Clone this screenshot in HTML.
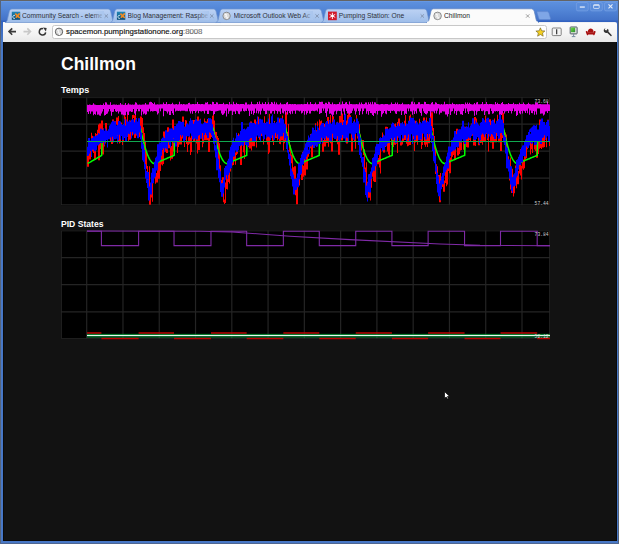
<!DOCTYPE html>
<html><head><meta charset="utf-8">
<style>
html,body{margin:0;padding:0;width:619px;height:544px;overflow:hidden;background:#4a7bcb;font-family:"Liberation Sans",sans-serif;}
.abs{position:absolute;}
#frame{left:0;top:0;width:619px;height:544px;background:linear-gradient(#6a9ce8 1px,#5c8fdd 2.5px,#5285d6 10px,#4373c9 20px,#2f5fbf 21px,#3464c0 22px,#4777c6 40px,#4777c6 544px);}
#topline{left:0;top:0;width:619px;height:0.9px;background:#646464;}
#lline{left:0;top:0;width:0.8px;height:544px;background:#56647a;}
#rline{left:618.4px;top:0;width:0.6px;height:544px;background:#56647a;}
#toolbar{left:2.6px;top:22px;width:614.2px;height:19.6px;background:linear-gradient(#e6e9ee 0px,#fbfbfb 1.2px,#f3f3f3 60%,#e8e8e8);border-radius:0 2px 0 0;}
#content{left:2.7px;top:41.6px;width:614.1px;height:499.8px;background:#121212;box-shadow:inset 1px 0 0 #0a0a0a, inset -1px 0 0 #0a0a0a, inset 0 -1px 0 #0a0a0a;}
#bline{left:0;top:543.4px;width:619px;height:0.6px;background:#4f6690;}
.tabt{position:absolute;top:12px;font-size:6.7px;color:#2e3038;white-space:nowrap;overflow:hidden;line-height:8px;}
#url{left:52px;top:25.1px;width:495px;height:13.9px;background:#fff;border:0.8px solid #c8c8c8;border-radius:2.5px;box-sizing:border-box;}
#urltext{left:66px;top:27.4px;font-size:7.78px;color:#111;-webkit-text-stroke:0.15px #111;white-space:nowrap;line-height:9px;}
#urltext span{color:#999;}
#title{left:61px;top:52.9px;font-size:17.5px;font-weight:bold;color:#fff;line-height:22px;white-space:nowrap;}
.h2{position:absolute;left:61px;font-size:9px;font-weight:bold;color:#fff;line-height:11px;white-space:nowrap;}
svg{position:absolute;left:0;top:0;}
</style></head><body>
<div id="frame" class="abs"></div>
<div id="topline" class="abs"></div>
<div id="lline" class="abs"></div>
<div id="rline" class="abs"></div>
<div id="bline" class="abs"></div>
<div id="toolbar" class="abs"></div>
<div id="content" class="abs"></div>

<svg width="619" height="42" viewBox="0 0 619 42">
  <defs>
    <linearGradient id="tabg" x1="0" y1="0" x2="0" y2="1">
      <stop offset="0" stop-color="#bcd2f4"/><stop offset="1" stop-color="#9ebde9"/>
    </linearGradient>
    <linearGradient id="fade" x1="0" y1="0" x2="1" y2="0">
      <stop offset="0" stop-color="#aac6ee" stop-opacity="0"/><stop offset="1" stop-color="#aac6ee" stop-opacity="1"/>
    </linearGradient>
    <linearGradient id="favg" x1="0" y1="0" x2="0" y2="1">
      <stop offset="0" stop-color="#2288b8"/><stop offset="1" stop-color="#0a4a72"/>
    </linearGradient>
  </defs>
  <!-- inactive tabs -->
  <path d="M5,22.5 C7,22 7.5,20 8,17 L9.3,11.5 C9.8,10 10.5,9.0 12,9.0 L108,9.0 C109.5,9.0 110.2,10 110.7,11.5 L112,17 C112.5,20 113,22 115,22.5 Z" fill="url(#tabg)" stroke="#6e93cf" stroke-width="0.7"/>
  <path d="M110.4,22.5 C112.4,22 112.9,20 113.4,17 L114.7,11.5 C115.2,10 115.9,9.0 117.4,9.0 L213.4,9.0 C214.9,9.0 215.6,10 216.1,11.5 L217.4,17 C217.9,20 218.4,22 220.4,22.5 Z" fill="url(#tabg)" stroke="#6e93cf" stroke-width="0.7"/>
  <path d="M215.8,22.5 C217.8,22 218.3,20 218.8,17 L220.1,11.5 C220.6,10 221.3,9.0 222.8,9.0 L318.8,9.0 C320.3,9.0 321,10 321.5,11.5 L322.8,17 C323.3,20 323.8,22 325.8,22.5 Z" fill="url(#tabg)" stroke="#6e93cf" stroke-width="0.7"/>
  <path d="M321.2,22.5 C323.2,22 323.7,20 324.2,17 L325.5,11.5 C326,10 326.7,9.0 328.2,9.0 L424.2,9.0 C425.7,9.0 426.4,10 426.9,11.5 L428.2,17 C428.7,20 429.2,22 431.2,22.5 Z" fill="url(#tabg)" stroke="#6e93cf" stroke-width="0.7"/>
  <!-- active tab -->
  <path d="M426.6,22.5 C428.6,22 429.1,20 429.6,17 L430.9,11.5 C431.4,10 432.1,8.8 433.6,8.8 L531.6,8.8 C533.1,9.4 533.8,10 534.3,11.5 L535.6,17 C536.1,20 536.6,22 538.6,22.5 Z" fill="#fbfbfb" stroke="#5f83bf" stroke-width="0.7"/>
  <rect x="427" y="21.6" width="111" height="1.5" fill="#fbfbfb"/>
  <!-- new tab button -->
  <path d="M537.5,11.6 L546.5,11.6 C548,11.6 548.6,12.2 549,13.2 L550.5,18.6 C550.6,19.2 550.2,19.6 549.5,19.6 L540.5,19.6 C539.4,19.6 539,19 538.7,18 L537,12.5 C536.9,12 537,11.6 537.5,11.6 Z" fill="#7fa6e6" stroke="#5f87cf" stroke-width="0.6"/>
  <!-- window buttons -->
  <rect x="576.4" y="2.6" width="11.8" height="8.3" rx="1.5" fill="#5a8ddc" stroke="#7ea4e4" stroke-width="0.6"/>
  <rect x="590.4" y="2.6" width="11.9" height="8.3" rx="1.5" fill="#5a8ddc" stroke="#7ea4e4" stroke-width="0.6"/>
  <rect x="604.5" y="2.6" width="12.1" height="8.3" rx="1.5" fill="#5a8ddc" stroke="#7ea4e4" stroke-width="0.6"/>
  <rect x="579.8" y="6.4" width="5" height="1.3" fill="#e4ebf8"/>
  <rect x="593.6" y="4.8" width="5.6" height="3.6" rx="0.6" fill="none" stroke="#e4ebf8" stroke-width="0.8"/>
  <rect x="593.6" y="4.6" width="5.6" height="1.1" fill="#e4ebf8"/>
  <path d="M608.5,4.4 L612.5,8.4 M612.5,4.4 L608.5,8.4" stroke="#e4ebf8" stroke-width="1.1"/>
  <!-- favicons -->
  <g>
    <rect x="11.8" y="11.7" width="8.4" height="8.1" fill="url(#favg)"/>
    <path d="M15.0,15.6 A1.5,1.5 0 1 0 15.0,18.2" fill="none" stroke="#d8eef8" stroke-width="1"/>
    <path d="M15.3,13.6 L19.700000000000003,18 M19.700000000000003,13.4 L15.8,17.8" stroke="#f08a22" stroke-width="1.7"/>
  </g>
  <g>
    <rect x="116.9" y="11.7" width="8.4" height="8.1" fill="url(#favg)"/>
    <path d="M120.10000000000001,15.6 A1.5,1.5 0 1 0 120.10000000000001,18.2" fill="none" stroke="#d8eef8" stroke-width="1"/>
    <path d="M120.4,13.6 L124.80000000000001,18 M124.80000000000001,13.4 L120.9,17.8" stroke="#f08a22" stroke-width="1.7"/>
  </g>
  <g>
    <circle cx="226.6" cy="15.9" r="3.7" fill="#dadada" stroke="#777" stroke-width="0.8"/>
    <path d="M224.6,13.8 L226.4,15 L225.8,16.4 L227.4,17.6 L226.9,19.2" fill="none" stroke="#fafafa" stroke-width="1.1"/>
  </g>
  <g>
    <rect x="328" y="11.6" width="8.8" height="8.6" fill="#d21a2a"/>
    <path d="M332.4,12.8 V19 M329.6,14.4 L335.2,17.4 M335.2,14.4 L329.6,17.4" stroke="#fff" stroke-width="0.9"/>
    <circle cx="332.4" cy="15.9" r="1.2" fill="#fff"/>
  </g>
  <g>
    <circle cx="437.6" cy="15.9" r="3.8" fill="#dadada" stroke="#777" stroke-width="0.8"/>
    <path d="M435.6,13.8 L437.4,15 L436.8,16.4 L438.4,17.6 L437.9,19.2" fill="none" stroke="#fafafa" stroke-width="1.1"/>
  </g>
  <!-- close x's -->
  <g stroke="#7a8aa6" stroke-width="0.8">
    <path d="M104.6,14.3 L108,17.7 M108,14.3 L104.6,17.7"/>
    <path d="M210.1,14.3 L213.5,17.7 M213.5,14.3 L210.1,17.7"/>
    <path d="M315.4,14.3 L318.8,17.7 M318.8,14.3 L315.4,17.7"/>
    <path d="M420.6,14.3 L424,17.7 M424,14.3 L420.6,17.7"/>
  </g>
  <path d="M526,14.3 L529.4,17.7 M529.4,14.3 L526,17.7" stroke="#8a8a8a" stroke-width="0.8"/>
  <!-- toolbar top edge -->
  <!-- nav icons -->
  <path d="M9,31.6 H16 M12.2,28.4 L9,31.6 L12.2,34.8" fill="none" stroke="#3a3a3a" stroke-width="1.6" stroke-linejoin="miter"/>
  <path d="M23.5,31.6 H30.5 M27.3,28.4 L30.5,31.6 L27.3,34.8" fill="none" stroke="#c8c8c8" stroke-width="1.6"/>
  <path d="M43.1,28.65 A3.2,3.2 0 1 0 45.65,32.4" fill="none" stroke="#333" stroke-width="1.5"/>
  <path d="M43.0,27.6 L46.7,27.9 L45.9,31.5 Z" fill="#333"/>
  <!-- star -->
  <path d="M540.4,27.8 L541.7,30.8 L544.9,31 L542.5,33 L543.2,36.2 L540.4,34.5 L537.6,36.2 L538.3,33 L535.9,31 L539.1,30.8 Z" fill="#f4d020" stroke="#6a5a20" stroke-width="0.6"/>
  <!-- I icon -->
  <rect x="552.2" y="28" width="9" height="7.6" rx="1" fill="#f4f4f4" stroke="#555" stroke-width="0.7"/>
  <path d="M556.7,29.3 V34.3" stroke="#222" stroke-width="1.1"/>
  <!-- green/gray icon -->
  <defs><linearGradient id="scr" x1="0" y1="0" x2="1" y2="1"><stop offset="0" stop-color="#6fe040"/><stop offset="1" stop-color="#2a8a30"/></linearGradient></defs>
  <rect x="570.2" y="27" width="6.9" height="6.9" rx="0.6" fill="#e8e8e8" stroke="#4a5560" stroke-width="1"/>
  <rect x="570.8" y="27.6" width="4.4" height="4.6" fill="url(#scr)"/>
  <path d="M573.6,34.2 V36.2 M571.8,36.6 H575.4" stroke="#6a8098" stroke-width="0.9"/>
  <!-- red couch -->
  <path d="M587.9,32.8 L587.9,31.0 C588.2,29.2 589.4,28.4 590.7,28.4 C592,28.4 593.2,29.2 593.5,31.0 L593.5,32.8 Z" fill="#a81010"/>
  <path d="M586.6,31.0 C585.6,31.0 585.6,32.0 586.0,32.6 L586.6,34.2 L587.2,35.2 L588,35.2 L588.2,34.4 L593.2,34.4 L593.4,35.2 L594.2,35.2 L594.8,34.2 L595.4,32.6 C595.8,32.0 595.8,31.0 594.8,31.0 C594.0,31.0 593.6,31.6 593.6,32.4 L587.8,32.4 C587.8,31.6 587.4,31.0 586.6,31.0 Z" fill="#a81010"/>
  <!-- wrench -->
  <path d="M605.6,28.2 C603.8,28.6 603.2,30.6 604.2,32.0 C605.0,33.0 606.4,33.2 607.2,32.8 L610.6,36.0 C611.2,36.6 612.2,35.8 611.6,35.1 L608.4,31.6 C608.8,30.8 608.6,29.6 607.8,28.8 L606.4,30.4 L605.0,30.0 L604.8,29.2 Z" fill="#333"/>
</svg>

<div class="tabt" style="left:22px;width:80px;">Community Search - eleme</div>
<div class="tabt" style="left:127.5px;width:80px;">Blog Management: Raspbe</div>
<div class="tabt" style="left:233.5px;width:78px;">Microsoft Outlook Web Ac</div>
<div class="tabt" style="left:338.8px;width:70px;">Pumping Station: One</div>
<div class="tabt" style="left:444px;width:70px;color:#222;">Chillmon</div>
<svg width="619" height="42" viewBox="0 0 619 42" style="pointer-events:none">
  <rect x="92" y="11" width="12" height="9" fill="url(#fade)"/>
  <rect x="197" y="11" width="12" height="9" fill="url(#fade)"/>
  <rect x="302" y="11" width="11" height="9" fill="url(#fade)"/>
</svg>

<div id="url" class="abs"></div>
<svg width="619" height="42" viewBox="0 0 619 42">
  <circle cx="59" cy="31.8" r="3.7" fill="#d8d8d8" stroke="#555" stroke-width="0.9"/>
  <path d="M57,29.7 L58.8,30.9 L58.2,32.3 L59.8,33.5 L59.3,35.1" fill="none" stroke="#fafafa" stroke-width="1.1"/>
  <path d="M540.4,27.8 L541.7,30.8 L544.9,31 L542.5,33 L543.2,36.2 L540.4,34.5 L537.6,36.2 L538.3,33 L535.9,31 L539.1,30.8 Z" fill="#f4d020" stroke="#6a5a20" stroke-width="0.6"/>
</svg>
<div id="urltext" class="abs">spacemon.pumpingstationone.org<span>:8008</span></div>

<div id="title" class="abs">Chillmon</div>
<div class="h2" style="top:85.4px;">Temps</div>
<div class="h2" style="top:219.1px;font-size:8.6px;">PID States</div>

<svg width="619" height="544" viewBox="0 0 619 544">
<rect x="61" y="97.2" width="489" height="107.99999999999999" fill="#000"/>
<line x1="86.70" y1="97.2" x2="86.70" y2="205.2" stroke="#242424" stroke-width="1.2"/>
<line x1="122.97" y1="97.2" x2="122.97" y2="205.2" stroke="#242424" stroke-width="1.2"/>
<line x1="159.25" y1="97.2" x2="159.25" y2="205.2" stroke="#242424" stroke-width="1.2"/>
<line x1="195.52" y1="97.2" x2="195.52" y2="205.2" stroke="#242424" stroke-width="1.2"/>
<line x1="231.80" y1="97.2" x2="231.80" y2="205.2" stroke="#242424" stroke-width="1.2"/>
<line x1="268.07" y1="97.2" x2="268.07" y2="205.2" stroke="#242424" stroke-width="1.2"/>
<line x1="304.35" y1="97.2" x2="304.35" y2="205.2" stroke="#242424" stroke-width="1.2"/>
<line x1="340.62" y1="97.2" x2="340.62" y2="205.2" stroke="#242424" stroke-width="1.2"/>
<line x1="376.90" y1="97.2" x2="376.90" y2="205.2" stroke="#242424" stroke-width="1.2"/>
<line x1="413.17" y1="97.2" x2="413.17" y2="205.2" stroke="#242424" stroke-width="1.2"/>
<line x1="449.45" y1="97.2" x2="449.45" y2="205.2" stroke="#242424" stroke-width="1.2"/>
<line x1="485.72" y1="97.2" x2="485.72" y2="205.2" stroke="#242424" stroke-width="1.2"/>
<line x1="522.00" y1="97.2" x2="522.00" y2="205.2" stroke="#242424" stroke-width="1.2"/>
<line x1="61" y1="124.20" x2="550" y2="124.20" stroke="#242424" stroke-width="1.2"/>
<line x1="61" y1="151.20" x2="550" y2="151.20" stroke="#242424" stroke-width="1.2"/>
<line x1="61" y1="178.20" x2="550" y2="178.20" stroke="#242424" stroke-width="1.2"/>
<rect x="61.5" y="97.7" width="488" height="106.99999999999999" fill="none" stroke="#262626" stroke-width="0.8"/>
<path d="M87,152.5h1V162.4h-1zM87,159.8h1V166.8h-1zM88,141.1h1V166.8h-1zM88,141.1h1V154.7h-1zM89,140.9h1V154.7h-1zM89,140.9h1V159.4h-1zM90,155.6h1V159.4h-1zM90,142.6h1V158.2h-1zM91,132.7h1V145.2h-1zM91,132.7h1V150.7h-1zM92,135.8h1V150.7h-1zM92,135.8h1V151.3h-1zM93,139.7h1V151.3h-1zM93,139.7h1V152.9h-1zM94,142.8h1V152.9h-1zM94,142.8h1V159.9h-1zM95,133.1h1V159.9h-1zM95,133.1h1V136.7h-1zM96,134.1h1V149.6h-1zM96,138.0h1V149.6h-1zM97,129.8h1V140.6h-1zM97,129.8h1V134.6h-1zM98,124.5h1V134.6h-1zM98,124.5h1V160.2h-1zM99,135.2h1V160.2h-1zM99,123.5h1V137.8h-1zM100,123.5h1V149.3h-1zM100,127.9h1V149.3h-1zM101,127.9h1V135.7h-1zM101,120.5h1V135.7h-1zM102,120.5h1V141.9h-1zM102,139.3h1V154.4h-1zM103,128.4h1V154.4h-1zM103,128.4h1V146.4h-1zM104,131.6h1V146.4h-1zM104,131.6h1V143.5h-1zM105,139.3h1V143.5h-1zM105,122.9h1V141.9h-1zM106,122.9h1V137.1h-1zM106,131.5h1V137.1h-1zM107,131.5h1V139.0h-1zM107,136.0h1V139.0h-1zM108,136.0h1V138.6h-1zM108,131.4h1V138.6h-1zM109,131.3h1V134.0h-1zM109,129.8h1V133.9h-1zM110,129.8h1V141.9h-1zM110,130.2h1V141.9h-1zM111,128.5h1V132.8h-1zM111,128.5h1V144.0h-1zM112,123.9h1V144.0h-1zM112,119.6h1V126.5h-1zM113,119.6h1V128.5h-1zM113,125.9h1V133.7h-1zM114,129.9h1V133.7h-1zM114,121.2h1V132.5h-1zM115,121.2h1V130.1h-1zM115,121.9h1V130.1h-1zM116,120.5h1V124.5h-1zM116,117.4h1V123.1h-1zM117,117.4h1V143.5h-1zM117,138.5h1V143.5h-1zM118,116.1h1V141.1h-1zM118,116.1h1V124.1h-1zM119,121.5h1V143.4h-1zM119,140.0h1V143.4h-1zM120,129.4h1V142.6h-1zM120,122.5h1V132.0h-1zM121,122.5h1V132.7h-1zM121,130.1h1V133.8h-1zM122,131.2h1V145.1h-1zM122,139.5h1V145.1h-1zM123,128.7h1V142.1h-1zM123,128.7h1V138.0h-1zM124,115.0h1V138.0h-1zM124,115.0h1V119.3h-1zM125,116.7h1V133.7h-1zM125,129.5h1V133.7h-1zM126,123.7h1V132.1h-1zM126,121.1h1V126.3h-1zM127,111.8h1V123.7h-1zM127,111.8h1V128.8h-1zM128,126.2h1V141.6h-1zM128,135.5h1V141.6h-1zM129,120.4h1V138.1h-1zM129,120.4h1V139.8h-1zM130,120.4h1V139.8h-1zM130,120.4h1V134.2h-1zM131,127.0h1V134.2h-1zM131,125.5h1V129.6h-1zM132,125.5h1V135.4h-1zM132,115.0h1V135.4h-1zM133,114.7h1V117.6h-1zM133,114.7h1V117.9h-1zM134,115.3h1V126.6h-1zM134,124.0h1V138.0h-1zM135,112.4h1V138.0h-1zM135,112.4h1V135.4h-1zM136,121.2h1V135.4h-1zM136,121.2h1V135.6h-1zM137,124.7h1V135.6h-1zM137,122.7h1V127.3h-1zM138,122.7h1V132.6h-1zM138,120.7h1V132.6h-1zM139,120.7h1V136.9h-1zM139,128.5h1V136.9h-1zM140,123.1h1V131.1h-1zM140,116.5h1V125.7h-1zM141,116.5h1V130.5h-1zM141,118.0h1V130.5h-1zM142,118.0h1V133.1h-1zM142,127.2h1V133.1h-1zM143,127.2h1V141.0h-1zM143,133.0h1V141.0h-1zM144,133.0h1V149.9h-1zM144,140.7h1V149.9h-1zM145,140.7h1V176.0h-1zM145,154.6h1V176.0h-1zM146,150.5h1V157.2h-1zM146,150.5h1V168.7h-1zM147,166.1h1V176.7h-1zM147,174.1h1V182.2h-1zM148,179.5h1V182.2h-1zM148,179.5h1V183.5h-1zM149,166.3h1V183.5h-1zM149,166.3h1V204.7h-1zM150,187.1h1V204.7h-1zM150,187.1h1V197.6h-1zM151,194.6h1V197.6h-1zM151,179.7h1V197.2h-1zM152,179.7h1V201.7h-1zM152,178.7h1V201.7h-1zM153,176.0h1V181.3h-1zM153,173.2h1V178.6h-1zM154,172.6h1V175.8h-1zM154,170.9h1V175.2h-1zM155,170.9h1V183.8h-1zM155,173.0h1V183.8h-1zM156,173.0h1V177.7h-1zM156,175.1h1V182.6h-1zM157,162.7h1V182.6h-1zM157,162.7h1V171.3h-1zM158,152.1h1V171.3h-1zM158,152.1h1V178.7h-1zM159,154.6h1V178.7h-1zM159,153.7h1V157.2h-1zM160,153.7h1V171.1h-1zM160,162.0h1V171.1h-1zM161,149.7h1V164.6h-1zM161,149.5h1V152.3h-1zM162,149.5h1V165.6h-1zM162,161.4h1V165.6h-1zM163,157.3h1V164.0h-1zM163,131.5h1V159.9h-1zM164,131.5h1V137.2h-1zM164,134.6h1V147.6h-1zM165,142.7h1V147.6h-1zM165,142.7h1V151.8h-1zM166,133.7h1V151.8h-1zM166,133.7h1V153.0h-1zM167,141.5h1V153.0h-1zM167,127.3h1V144.1h-1zM168,127.3h1V137.5h-1zM168,134.9h1V148.2h-1zM169,128.9h1V148.2h-1zM169,128.9h1V148.1h-1zM170,145.5h1V160.5h-1zM170,148.9h1V160.5h-1zM171,146.0h1V151.5h-1zM171,146.0h1V158.7h-1zM172,141.1h1V158.7h-1zM172,119.6h1V143.7h-1zM173,119.6h1V151.4h-1zM173,143.3h1V151.4h-1zM174,143.3h1V154.7h-1zM174,132.6h1V154.7h-1zM175,130.5h1V135.2h-1zM175,130.5h1V133.6h-1zM176,131.0h1V140.4h-1zM176,131.3h1V140.4h-1zM177,131.3h1V153.0h-1zM177,144.3h1V153.0h-1zM178,135.1h1V146.9h-1zM178,123.9h1V137.7h-1zM179,123.9h1V144.4h-1zM179,136.3h1V144.4h-1zM180,123.2h1V138.9h-1zM180,123.2h1V144.4h-1zM181,125.3h1V144.4h-1zM181,125.3h1V138.5h-1zM182,133.5h1V138.5h-1zM182,116.4h1V136.1h-1zM183,116.4h1V128.8h-1zM183,126.2h1V131.2h-1zM184,128.6h1V147.1h-1zM184,126.7h1V147.1h-1zM185,119.9h1V129.3h-1zM185,119.9h1V126.1h-1zM186,120.4h1V126.1h-1zM186,120.4h1V144.1h-1zM187,141.5h1V152.0h-1zM187,142.3h1V152.0h-1zM188,137.3h1V144.9h-1zM188,137.3h1V141.1h-1zM189,132.5h1V141.1h-1zM189,132.5h1V143.7h-1zM190,141.1h1V155.0h-1zM190,137.7h1V155.0h-1zM191,137.7h1V152.1h-1zM191,134.5h1V152.1h-1zM192,125.1h1V137.1h-1zM192,120.1h1V127.7h-1zM193,120.1h1V130.8h-1zM193,128.2h1V141.8h-1zM194,120.0h1V141.8h-1zM194,120.0h1V123.0h-1zM195,120.4h1V138.3h-1zM195,125.0h1V138.3h-1zM196,125.0h1V143.6h-1zM196,120.3h1V143.6h-1zM197,120.3h1V153.6h-1zM197,116.4h1V153.6h-1zM198,116.4h1V131.9h-1zM198,129.3h1V150.0h-1zM199,138.2h1V150.0h-1zM199,124.6h1V140.8h-1zM200,118.8h1V127.2h-1zM200,118.8h1V138.5h-1zM201,124.0h1V138.5h-1zM201,124.0h1V128.0h-1zM202,125.4h1V147.2h-1zM202,141.0h1V147.2h-1zM203,127.9h1V143.6h-1zM203,127.9h1V138.5h-1zM204,118.6h1V138.5h-1zM204,118.6h1V140.3h-1zM205,121.2h1V140.3h-1zM205,121.2h1V124.2h-1zM206,121.6h1V140.2h-1zM206,125.6h1V140.2h-1zM207,119.0h1V128.2h-1zM207,119.0h1V140.3h-1zM208,137.7h1V140.9h-1zM208,138.3h1V151.9h-1zM209,129.6h1V151.9h-1zM209,128.5h1V132.2h-1zM210,128.5h1V138.9h-1zM210,124.6h1V138.9h-1zM211,124.6h1V136.9h-1zM211,121.6h1V136.9h-1zM212,115.8h1V124.2h-1zM212,115.8h1V138.1h-1zM213,113.4h1V138.1h-1zM213,113.4h1V130.5h-1zM214,120.5h1V130.5h-1zM214,120.5h1V134.3h-1zM215,131.7h1V141.7h-1zM215,132.0h1V141.7h-1zM216,132.0h1V147.6h-1zM216,136.1h1V147.6h-1zM217,136.1h1V160.2h-1zM217,138.0h1V160.2h-1zM218,138.0h1V168.9h-1zM218,143.2h1V168.9h-1zM219,143.2h1V150.7h-1zM219,148.1h1V172.0h-1zM220,165.3h1V172.0h-1zM220,165.3h1V182.3h-1zM221,179.7h1V183.9h-1zM221,181.3h1V193.7h-1zM222,187.6h1V193.7h-1zM222,177.3h1V190.2h-1zM223,177.3h1V184.8h-1zM223,182.2h1V202.2h-1zM224,199.6h1V204.1h-1zM224,200.5h1V204.1h-1zM225,190.3h1V203.1h-1zM225,182.6h1V192.9h-1zM226,182.6h1V189.1h-1zM226,167.4h1V189.1h-1zM227,167.4h1V189.6h-1zM227,179.4h1V189.6h-1zM228,176.2h1V182.0h-1zM228,164.2h1V178.8h-1zM229,164.2h1V183.5h-1zM229,169.0h1V183.5h-1zM230,153.6h1V171.6h-1zM230,153.6h1V160.3h-1zM231,157.7h1V165.5h-1zM231,162.9h1V165.6h-1zM232,161.9h1V165.6h-1zM232,161.9h1V164.9h-1zM233,158.6h1V164.9h-1zM233,156.3h1V161.2h-1zM234,150.9h1V158.9h-1zM234,150.9h1V160.1h-1zM235,157.5h1V164.8h-1zM235,152.5h1V164.8h-1zM236,137.1h1V155.1h-1zM236,137.1h1V152.3h-1zM237,149.7h1V153.8h-1zM237,145.3h1V153.8h-1zM238,133.2h1V147.9h-1zM238,133.2h1V145.0h-1zM239,135.5h1V145.0h-1zM239,134.8h1V138.1h-1zM240,134.8h1V149.8h-1zM240,147.2h1V164.9h-1zM241,150.8h1V164.9h-1zM241,139.5h1V153.4h-1zM242,138.6h1V142.1h-1zM242,138.6h1V143.1h-1zM243,140.5h1V148.7h-1zM243,146.1h1V152.2h-1zM244,149.6h1V159.0h-1zM244,137.6h1V159.0h-1zM245,131.1h1V140.2h-1zM245,131.1h1V142.2h-1zM246,136.2h1V142.2h-1zM246,130.2h1V138.8h-1zM247,130.2h1V134.9h-1zM247,132.3h1V137.1h-1zM248,134.5h1V147.0h-1zM248,134.0h1V147.0h-1zM249,134.0h1V138.4h-1zM249,135.8h1V148.4h-1zM250,122.4h1V148.4h-1zM250,121.4h1V125.0h-1zM251,121.4h1V150.4h-1zM251,129.8h1V150.4h-1zM252,129.8h1V140.2h-1zM252,137.6h1V146.3h-1zM253,130.6h1V146.3h-1zM253,130.6h1V146.3h-1zM254,133.2h1V146.3h-1zM254,119.6h1V135.8h-1zM255,119.6h1V135.9h-1zM255,133.3h1V140.2h-1zM256,137.6h1V147.4h-1zM256,131.7h1V147.4h-1zM257,122.7h1V134.3h-1zM257,116.8h1V125.3h-1zM258,116.8h1V129.4h-1zM258,123.9h1V129.4h-1zM259,123.9h1V137.8h-1zM259,135.2h1V139.7h-1zM260,126.1h1V139.7h-1zM260,123.1h1V128.7h-1zM261,123.1h1V136.0h-1zM261,130.3h1V136.0h-1zM262,130.3h1V133.3h-1zM262,129.3h1V133.3h-1zM263,129.3h1V144.4h-1zM263,132.2h1V144.4h-1zM264,116.2h1V134.8h-1zM264,116.2h1V125.6h-1zM265,123.0h1V131.7h-1zM265,129.1h1V132.3h-1zM266,129.7h1V140.7h-1zM266,131.1h1V140.7h-1zM267,131.1h1V144.6h-1zM267,122.9h1V144.6h-1zM268,122.9h1V154.0h-1zM268,149.9h1V154.0h-1zM269,113.7h1V152.5h-1zM269,113.7h1V127.2h-1zM270,124.6h1V127.2h-1zM270,124.6h1V136.0h-1zM271,120.5h1V136.0h-1zM271,120.5h1V135.7h-1zM272,132.3h1V135.7h-1zM272,132.3h1V141.6h-1zM273,139.0h1V145.0h-1zM273,135.2h1V145.0h-1zM274,121.1h1V137.8h-1zM274,121.1h1V135.9h-1zM275,128.9h1V135.9h-1zM275,128.9h1V137.9h-1zM276,126.1h1V137.9h-1zM276,126.1h1V136.3h-1zM277,133.7h1V140.5h-1zM277,129.2h1V140.5h-1zM278,125.9h1V131.8h-1zM278,125.9h1V134.3h-1zM279,118.6h1V134.3h-1zM279,118.6h1V143.7h-1zM280,141.1h1V144.2h-1zM280,118.7h1V144.2h-1zM281,118.7h1V128.0h-1zM281,125.4h1V140.6h-1zM282,115.5h1V140.6h-1zM282,115.5h1V140.4h-1zM283,137.8h1V150.4h-1zM283,132.2h1V150.4h-1zM284,132.2h1V143.2h-1zM284,138.6h1V143.2h-1zM285,131.2h1V141.2h-1zM285,112.3h1V133.8h-1zM286,112.3h1V125.9h-1zM286,123.3h1V140.6h-1zM287,132.1h1V140.6h-1zM287,132.1h1V140.3h-1zM288,124.1h1V140.3h-1zM288,124.1h1V142.6h-1zM289,140.0h1V151.7h-1zM289,145.3h1V151.7h-1zM290,145.3h1V165.0h-1zM290,160.7h1V165.0h-1zM291,156.0h1V163.3h-1zM291,154.4h1V158.6h-1zM292,154.4h1V174.9h-1zM292,167.3h1V174.9h-1zM293,167.3h1V179.7h-1zM293,177.1h1V188.2h-1zM294,169.5h1V188.2h-1zM294,166.3h1V172.1h-1zM295,166.3h1V187.1h-1zM295,184.5h1V195.3h-1zM296,187.2h1V195.3h-1zM296,187.2h1V204.2h-1zM297,184.8h1V204.2h-1zM297,181.2h1V187.4h-1zM298,171.5h1V183.8h-1zM298,171.5h1V185.5h-1zM299,168.4h1V185.5h-1zM299,168.4h1V174.3h-1zM300,166.1h1V174.3h-1zM300,158.7h1V168.7h-1zM301,158.7h1V167.3h-1zM301,164.7h1V179.9h-1zM302,152.0h1V179.9h-1zM302,152.0h1V176.8h-1zM303,165.7h1V176.8h-1zM303,165.7h1V175.2h-1zM304,162.0h1V175.2h-1zM304,159.1h1V164.6h-1zM305,159.1h1V175.4h-1zM305,148.1h1V175.4h-1zM306,148.1h1V153.2h-1zM306,150.6h1V169.6h-1zM307,142.1h1V169.6h-1zM307,142.1h1V155.0h-1zM308,152.4h1V156.8h-1zM308,151.2h1V156.8h-1zM309,143.6h1V153.8h-1zM309,143.6h1V148.2h-1zM310,134.1h1V148.2h-1zM310,134.1h1V137.9h-1zM311,135.3h1V149.4h-1zM311,146.8h1V157.2h-1zM312,127.8h1V157.2h-1zM312,127.8h1V146.2h-1zM313,141.8h1V146.2h-1zM313,141.8h1V147.5h-1zM314,140.3h1V147.5h-1zM314,132.4h1V142.9h-1zM315,123.3h1V135.0h-1zM315,123.3h1V145.4h-1zM316,131.1h1V145.4h-1zM316,130.3h1V133.7h-1zM317,121.4h1V132.9h-1zM317,121.4h1V134.2h-1zM318,131.6h1V138.8h-1zM318,136.1h1V138.8h-1zM319,119.5h1V138.7h-1zM319,119.5h1V141.3h-1zM320,128.3h1V141.3h-1zM320,121.2h1V130.9h-1zM321,120.6h1V123.8h-1zM321,120.6h1V141.0h-1zM322,138.4h1V145.7h-1zM322,143.1h1V151.8h-1zM323,148.9h1V151.8h-1zM323,140.1h1V151.5h-1zM324,124.1h1V142.7h-1zM324,124.1h1V146.5h-1zM325,139.7h1V146.5h-1zM325,139.7h1V142.6h-1zM326,132.7h1V142.6h-1zM326,132.7h1V143.0h-1zM327,127.8h1V143.0h-1zM327,117.0h1V130.4h-1zM328,117.0h1V146.7h-1zM328,139.2h1V146.7h-1zM329,131.3h1V141.8h-1zM329,129.4h1V133.9h-1zM330,115.1h1V132.0h-1zM330,115.1h1V143.2h-1zM331,127.1h1V143.2h-1zM331,127.1h1V151.5h-1zM332,116.0h1V151.5h-1zM332,116.0h1V118.8h-1zM333,116.2h1V130.0h-1zM333,127.4h1V134.2h-1zM334,131.6h1V138.7h-1zM334,126.0h1V138.7h-1zM335,126.0h1V136.6h-1zM335,132.4h1V136.6h-1zM336,132.4h1V141.2h-1zM336,134.6h1V141.2h-1zM337,121.8h1V137.2h-1zM337,121.8h1V144.2h-1zM338,141.6h1V147.9h-1zM338,145.3h1V154.8h-1zM339,128.4h1V154.8h-1zM339,115.9h1V131.0h-1zM340,115.9h1V122.4h-1zM340,118.6h1V122.4h-1zM341,118.6h1V140.6h-1zM341,113.6h1V140.6h-1zM342,113.6h1V140.4h-1zM342,123.1h1V140.4h-1zM343,123.1h1V131.9h-1zM343,120.0h1V131.9h-1zM344,120.0h1V123.9h-1zM344,121.3h1V135.7h-1zM345,127.2h1V135.7h-1zM345,127.2h1V130.3h-1zM346,120.5h1V130.3h-1zM346,120.5h1V143.6h-1zM347,115.0h1V143.6h-1zM347,115.0h1V124.5h-1zM348,121.9h1V126.3h-1zM348,112.6h1V126.3h-1zM349,112.6h1V125.2h-1zM349,120.7h1V125.2h-1zM350,115.2h1V123.3h-1zM350,115.2h1V125.5h-1zM351,122.9h1V136.3h-1zM351,133.7h1V151.5h-1zM352,139.2h1V151.5h-1zM352,123.4h1V141.8h-1zM353,123.4h1V135.6h-1zM353,123.9h1V135.6h-1zM354,119.6h1V126.5h-1zM354,119.6h1V141.8h-1zM355,139.2h1V148.8h-1zM355,126.8h1V148.8h-1zM356,115.0h1V129.4h-1zM356,115.0h1V126.2h-1zM357,123.6h1V132.7h-1zM357,130.1h1V138.4h-1zM358,135.5h1V138.4h-1zM358,128.1h1V138.1h-1zM359,124.3h1V130.7h-1zM359,124.3h1V137.0h-1zM360,134.4h1V142.2h-1zM360,139.6h1V150.5h-1zM361,142.7h1V150.5h-1zM361,140.3h1V145.3h-1zM362,140.3h1V146.4h-1zM362,140.1h1V146.4h-1zM363,140.1h1V155.0h-1zM363,149.3h1V155.0h-1zM364,149.3h1V154.8h-1zM364,152.2h1V170.0h-1zM365,167.4h1V182.0h-1zM365,178.9h1V182.0h-1zM366,162.3h1V181.5h-1zM366,162.3h1V188.5h-1zM367,181.7h1V188.5h-1zM367,181.7h1V190.1h-1zM368,179.7h1V190.1h-1zM368,179.7h1V197.7h-1zM369,187.2h1V197.7h-1zM369,174.0h1V189.8h-1zM370,174.0h1V200.5h-1zM370,176.4h1V200.5h-1zM371,176.4h1V187.7h-1zM371,172.0h1V187.7h-1zM372,170.8h1V174.6h-1zM372,170.8h1V176.8h-1zM373,164.5h1V176.8h-1zM373,164.5h1V181.3h-1zM374,159.3h1V181.3h-1zM374,159.3h1V182.1h-1zM375,166.3h1V182.1h-1zM375,152.4h1V168.9h-1zM376,151.1h1V155.0h-1zM376,151.1h1V161.9h-1zM377,150.2h1V161.9h-1zM377,150.2h1V164.2h-1zM378,159.8h1V164.2h-1zM378,158.0h1V162.4h-1zM379,158.0h1V167.4h-1zM379,143.5h1V167.4h-1zM380,143.5h1V173.6h-1zM380,141.6h1V173.6h-1zM381,138.6h1V144.2h-1zM381,138.6h1V141.2h-1zM382,132.6h1V141.2h-1zM382,132.6h1V148.4h-1zM383,139.5h1V148.4h-1zM383,139.5h1V152.5h-1zM384,136.4h1V152.5h-1zM384,136.4h1V144.1h-1zM385,141.5h1V146.9h-1zM385,126.7h1V146.9h-1zM386,126.7h1V138.8h-1zM386,127.0h1V138.8h-1zM387,127.0h1V135.1h-1zM387,132.5h1V151.6h-1zM388,134.8h1V151.6h-1zM388,134.8h1V154.6h-1zM389,152.0h1V156.8h-1zM389,129.1h1V156.8h-1zM390,129.1h1V135.9h-1zM390,128.0h1V135.9h-1zM391,128.0h1V133.5h-1zM391,130.9h1V145.0h-1zM392,142.4h1V150.1h-1zM392,125.3h1V150.1h-1zM393,125.3h1V147.1h-1zM393,129.4h1V147.1h-1zM394,124.2h1V132.0h-1zM394,124.2h1V144.8h-1zM395,123.4h1V144.8h-1zM395,123.4h1V143.8h-1zM396,135.1h1V143.8h-1zM396,131.8h1V137.7h-1zM397,131.8h1V152.9h-1zM397,122.0h1V152.9h-1zM398,119.9h1V124.6h-1zM398,118.6h1V122.5h-1zM399,118.6h1V127.1h-1zM399,124.5h1V141.8h-1zM400,127.3h1V141.8h-1zM400,127.3h1V145.6h-1zM401,140.5h1V145.6h-1zM401,140.5h1V144.6h-1zM402,139.7h1V144.6h-1zM402,129.9h1V142.3h-1zM403,129.9h1V141.9h-1zM403,134.1h1V141.9h-1zM404,120.8h1V136.7h-1zM404,120.8h1V139.9h-1zM405,115.1h1V139.9h-1zM405,115.1h1V133.8h-1zM406,131.2h1V143.8h-1zM406,126.9h1V143.8h-1zM407,126.9h1V146.2h-1zM407,143.2h1V146.2h-1zM408,121.9h1V145.8h-1zM408,121.9h1V124.8h-1zM409,115.8h1V124.8h-1zM409,115.8h1V144.9h-1zM410,114.6h1V144.9h-1zM410,114.6h1V133.9h-1zM411,117.7h1V133.9h-1zM411,117.7h1V129.5h-1zM412,126.3h1V129.5h-1zM412,126.3h1V135.1h-1zM413,132.5h1V139.2h-1zM413,121.6h1V139.2h-1zM414,121.6h1V151.0h-1zM414,139.8h1V151.0h-1zM415,133.9h1V142.4h-1zM415,120.7h1V136.5h-1zM416,120.7h1V140.0h-1zM416,137.4h1V141.8h-1zM417,139.2h1V144.8h-1zM417,133.9h1V144.8h-1zM418,126.6h1V136.5h-1zM418,126.6h1V137.0h-1zM419,118.7h1V137.0h-1zM419,118.7h1V130.1h-1zM420,127.5h1V140.4h-1zM420,137.7h1V140.4h-1zM421,137.7h1V149.0h-1zM421,142.1h1V149.0h-1zM422,142.1h1V145.1h-1zM422,130.1h1V145.1h-1zM423,125.0h1V132.7h-1zM423,117.6h1V127.6h-1zM424,117.6h1V144.7h-1zM424,136.1h1V144.7h-1zM425,136.1h1V146.8h-1zM425,121.2h1V146.8h-1zM426,117.4h1V123.8h-1zM426,117.4h1V144.5h-1zM427,141.9h1V147.0h-1zM427,133.7h1V147.0h-1zM428,133.7h1V141.0h-1zM428,138.4h1V143.2h-1zM429,136.4h1V143.2h-1zM429,128.3h1V139.0h-1zM430,115.7h1V130.9h-1zM430,115.7h1V137.4h-1zM431,134.8h1V138.4h-1zM431,112.3h1V138.4h-1zM432,112.3h1V120.6h-1zM432,118.0h1V130.7h-1zM433,128.1h1V143.6h-1zM433,135.9h1V143.6h-1zM434,135.9h1V152.0h-1zM434,147.9h1V152.0h-1zM435,147.9h1V153.5h-1zM435,150.9h1V174.0h-1zM436,164.2h1V174.0h-1zM436,164.2h1V168.8h-1zM437,166.2h1V169.9h-1zM437,167.3h1V178.9h-1zM438,176.3h1V183.1h-1zM438,174.9h1V183.1h-1zM439,174.9h1V177.7h-1zM439,175.1h1V202.3h-1zM440,173.0h1V202.3h-1zM440,173.0h1V185.9h-1zM441,180.9h1V185.9h-1zM441,178.5h1V183.5h-1zM442,177.5h1V181.1h-1zM442,177.5h1V187.1h-1zM443,179.2h1V187.1h-1zM443,179.2h1V191.8h-1zM444,180.5h1V191.8h-1zM444,180.5h1V183.1h-1zM445,177.7h1V183.1h-1zM445,168.3h1V180.3h-1zM446,168.3h1V186.2h-1zM446,181.9h1V186.2h-1zM447,175.0h1V184.5h-1zM447,167.4h1V177.6h-1zM448,167.4h1V171.0h-1zM448,161.8h1V171.0h-1zM449,154.9h1V164.4h-1zM449,154.9h1V173.3h-1zM450,169.4h1V173.3h-1zM450,157.5h1V172.0h-1zM451,146.6h1V160.1h-1zM451,146.6h1V156.8h-1zM452,145.6h1V156.8h-1zM452,145.6h1V154.9h-1zM453,148.5h1V154.9h-1zM453,138.7h1V151.1h-1zM454,138.7h1V152.3h-1zM454,149.7h1V159.9h-1zM455,145.2h1V159.9h-1zM455,136.5h1V147.8h-1zM456,136.5h1V141.5h-1zM456,128.8h1V141.5h-1zM457,128.8h1V147.5h-1zM457,144.9h1V155.5h-1zM458,147.8h1V155.5h-1zM458,147.8h1V154.0h-1zM459,141.7h1V154.0h-1zM459,141.7h1V150.5h-1zM460,134.8h1V150.5h-1zM460,134.8h1V149.9h-1zM461,146.1h1V149.9h-1zM461,136.5h1V148.7h-1zM462,130.4h1V139.1h-1zM462,130.4h1V137.0h-1zM463,134.4h1V144.6h-1zM463,142.0h1V149.8h-1zM464,134.0h1V149.8h-1zM464,126.7h1V136.6h-1zM465,126.7h1V142.3h-1zM465,129.9h1V142.3h-1zM466,129.9h1V146.9h-1zM466,141.7h1V146.9h-1zM467,138.8h1V144.3h-1zM467,138.8h1V147.6h-1zM468,144.7h1V147.6h-1zM468,137.3h1V147.3h-1zM469,136.9h1V139.9h-1zM469,134.4h1V139.5h-1zM470,134.4h1V141.9h-1zM470,133.1h1V141.9h-1zM471,123.6h1V135.7h-1zM471,123.6h1V129.7h-1zM472,127.1h1V135.8h-1zM472,124.9h1V135.8h-1zM473,124.9h1V132.4h-1zM473,129.8h1V145.6h-1zM474,126.7h1V145.6h-1zM474,117.0h1V129.3h-1zM475,117.0h1V146.1h-1zM475,121.2h1V146.1h-1zM476,118.6h1V123.8h-1zM476,118.6h1V135.6h-1zM477,131.6h1V135.6h-1zM477,131.6h1V135.2h-1zM478,132.6h1V140.4h-1zM478,137.8h1V145.2h-1zM479,129.9h1V145.2h-1zM479,129.9h1V143.1h-1zM480,134.4h1V143.1h-1zM480,122.9h1V137.0h-1zM481,122.9h1V142.7h-1zM481,130.6h1V142.7h-1zM482,130.6h1V144.8h-1zM482,121.1h1V144.8h-1zM483,121.1h1V142.1h-1zM483,137.6h1V142.1h-1zM484,131.7h1V140.2h-1zM484,131.7h1V142.1h-1zM485,115.7h1V142.1h-1zM485,115.7h1V133.9h-1zM486,129.5h1V133.9h-1zM486,125.7h1V132.1h-1zM487,125.7h1V129.5h-1zM487,126.9h1V139.9h-1zM488,137.3h1V151.6h-1zM488,119.8h1V151.6h-1zM489,119.8h1V130.6h-1zM489,119.2h1V130.6h-1zM490,119.2h1V139.1h-1zM490,136.5h1V142.5h-1zM491,132.4h1V142.5h-1zM491,126.1h1V135.0h-1zM492,126.1h1V137.8h-1zM492,135.2h1V148.8h-1zM493,126.0h1V148.8h-1zM493,126.0h1V136.7h-1zM494,118.4h1V136.7h-1zM494,118.4h1V142.2h-1zM495,128.2h1V142.2h-1zM495,128.2h1V135.4h-1zM496,132.8h1V142.2h-1zM496,125.6h1V142.2h-1zM497,114.7h1V128.2h-1zM497,114.7h1V135.3h-1zM498,129.9h1V135.3h-1zM498,129.9h1V142.2h-1zM499,128.7h1V142.2h-1zM499,128.7h1V133.6h-1zM500,124.7h1V133.6h-1zM500,124.7h1V151.1h-1zM501,120.4h1V151.1h-1zM501,120.4h1V127.2h-1zM502,124.6h1V138.0h-1zM502,112.8h1V138.0h-1zM503,112.8h1V127.2h-1zM503,124.6h1V132.8h-1zM504,130.2h1V136.0h-1zM504,132.5h1V136.0h-1zM505,132.5h1V135.9h-1zM505,133.3h1V137.2h-1zM506,134.6h1V144.1h-1zM506,141.5h1V147.6h-1zM507,145.0h1V166.2h-1zM507,156.2h1V166.2h-1zM508,156.2h1V160.4h-1zM508,157.8h1V167.3h-1zM509,164.7h1V167.6h-1zM509,165.0h1V180.4h-1zM510,157.5h1V180.4h-1zM510,157.5h1V189.6h-1zM511,187.0h1V193.1h-1zM511,168.8h1V193.1h-1zM512,168.8h1V181.4h-1zM512,178.8h1V188.6h-1zM513,186.0h1V196.4h-1zM513,190.7h1V196.4h-1zM514,185.4h1V193.3h-1zM514,179.4h1V188.0h-1zM515,176.3h1V182.0h-1zM515,165.4h1V178.9h-1zM516,165.4h1V188.2h-1zM516,178.9h1V188.2h-1zM517,169.9h1V181.5h-1zM517,169.9h1V184.3h-1zM518,175.4h1V184.3h-1zM518,170.9h1V178.0h-1zM519,159.1h1V173.5h-1zM519,158.0h1V161.7h-1zM520,149.2h1V160.6h-1zM520,149.2h1V175.6h-1zM521,173.0h1V179.6h-1zM521,166.0h1V179.6h-1zM522,154.8h1V168.6h-1zM522,154.8h1V162.0h-1zM523,159.4h1V169.8h-1zM523,165.6h1V169.8h-1zM524,155.7h1V168.2h-1zM524,155.7h1V159.7h-1zM525,142.8h1V159.7h-1zM525,142.8h1V158.3h-1zM526,138.9h1V158.3h-1zM526,138.9h1V148.5h-1zM527,145.9h1V149.3h-1zM527,136.4h1V149.3h-1zM528,136.1h1V139.0h-1zM528,133.2h1V138.7h-1zM529,133.2h1V143.3h-1zM529,138.2h1V143.3h-1zM530,138.2h1V154.5h-1zM530,146.7h1V154.5h-1zM531,133.3h1V149.3h-1zM531,129.4h1V135.9h-1zM532,129.4h1V153.0h-1zM532,129.4h1V153.0h-1zM533,129.4h1V141.2h-1zM533,135.6h1V141.2h-1zM534,131.1h1V138.2h-1zM534,131.1h1V149.6h-1zM535,134.6h1V149.6h-1zM535,134.6h1V150.9h-1zM536,127.9h1V150.9h-1zM536,127.9h1V157.7h-1zM537,130.6h1V157.7h-1zM537,130.6h1V154.1h-1zM538,131.4h1V154.1h-1zM538,131.4h1V148.7h-1zM539,132.4h1V148.7h-1zM539,119.4h1V135.0h-1zM540,119.4h1V133.1h-1zM540,130.5h1V147.9h-1zM541,145.3h1V148.9h-1zM541,137.6h1V148.9h-1zM542,134.4h1V140.2h-1zM542,134.4h1V147.4h-1zM543,134.8h1V147.4h-1zM543,134.8h1V147.1h-1zM544,129.2h1V147.1h-1zM544,129.2h1V137.2h-1zM545,125.6h1V137.2h-1zM545,125.6h1V133.4h-1zM546,130.8h1V147.3h-1zM546,122.9h1V147.3h-1zM547,122.8h1V125.5h-1zM547,119.7h1V125.4h-1zM548,119.7h1V136.5h-1zM548,129.2h1V136.5h-1zM549,129.2h1V140.8h-1zM549,138.2h1V145.9h-1z" fill="#ff0000"/>
<path d="M87.70,163.5 88.20,163.2 88.70,162.9 89.20,162.6 89.70,162.3 90.20,162.1 90.70,161.8 91.20,161.5 91.70,161.2 92.20,160.9 92.70,160.6 93.20,160.3 93.70,160.0 94.20,159.7 94.70,159.5 95.20,159.2 95.70,158.9 96.20,158.6 96.70,158.3 97.20,158.0 97.70,157.7 98.20,157.4 98.70,157.1 99.20,156.9 99.70,156.6 100.20,156.3 100.70,156.0 101.20,155.7 101.70,155.4 102.20,133.0 102.70,132.9 103.20,132.8 103.70,132.7 104.20,132.7 104.70,132.6 105.20,132.5 105.70,132.5 106.20,132.4 106.70,132.3 107.20,132.2 107.70,132.2 108.20,132.1 108.70,132.0 109.20,132.0 109.70,131.9 110.20,131.8 110.70,131.7 111.20,131.7 111.70,131.6 112.20,131.5 112.70,131.5 113.20,131.4 113.70,131.3 114.20,131.2 114.70,131.2 115.20,131.1 115.70,131.0 116.20,131.0 116.70,130.9 117.20,130.8 117.70,130.7 118.20,130.7 118.70,130.6 119.20,130.5 119.70,130.5 120.20,130.4 120.70,130.3 121.20,130.2 121.70,130.2 122.20,130.1 122.70,130.0 123.20,130.0 123.70,129.9 124.20,129.8 124.70,129.7 125.20,129.7 125.70,129.6 126.20,129.5 126.70,129.5 127.20,129.4 127.70,129.3 128.20,129.2 128.70,129.2 129.20,129.1 129.70,129.0 130.20,129.0 130.70,128.9 131.20,128.8 131.70,128.7 132.20,128.7 132.70,128.6 133.20,128.5 133.70,128.5 134.20,128.4 134.70,128.3 135.20,128.2 135.70,128.2 136.20,128.1 136.70,128.0 137.20,128.0 137.70,127.9 138.20,127.8 138.70,127.7 139.20,127.7 139.70,127.6 140.20,127.5 140.70,129.0 141.20,131.5 141.70,133.8 142.20,136.1 142.70,138.2 143.20,140.3 143.70,142.3 144.20,144.2 144.70,146.1 145.20,147.8 145.70,149.4 146.20,151.0 146.70,152.4 147.20,153.8 147.70,155.1 148.20,156.3 148.70,157.4 149.20,158.4 149.70,159.3 150.20,160.1 150.70,160.9 151.20,161.5 151.70,162.1 152.20,162.6 152.70,163.0 153.20,163.2 153.70,163.5 154.20,163.6 154.70,163.5 155.20,163.2 155.70,163.0 156.20,162.8 156.70,162.6 157.20,162.4 157.70,162.2 158.20,162.0 158.70,161.8 159.20,161.6 159.70,161.4 160.20,161.2 160.70,161.0 161.20,160.7 161.70,160.5 162.20,160.3 162.70,160.1 163.20,159.9 163.70,159.7 164.20,159.5 164.70,159.3 165.20,159.1 165.70,158.9 166.20,158.7 166.70,158.5 167.20,158.2 167.70,158.0 168.20,157.8 168.70,157.6 169.20,157.4 169.70,157.2 170.20,157.0 170.70,156.8 171.20,156.6 171.70,156.4 172.20,156.2 172.70,156.0 173.20,155.7 173.70,155.5 174.20,155.3 174.70,133.0 175.20,132.9 175.70,132.8 176.20,132.8 176.70,132.7 177.20,132.6 177.70,132.5 178.20,132.5 178.70,132.4 179.20,132.3 179.70,132.3 180.20,132.2 180.70,132.1 181.20,132.0 181.70,132.0 182.20,131.9 182.70,131.8 183.20,131.8 183.70,131.7 184.20,131.6 184.70,131.5 185.20,131.5 185.70,131.4 186.20,131.3 186.70,131.3 187.20,131.2 187.70,131.1 188.20,131.0 188.70,131.0 189.20,130.9 189.70,130.8 190.20,130.8 190.70,130.7 191.20,130.6 191.70,130.5 192.20,130.5 192.70,130.4 193.20,130.3 193.70,130.3 194.20,130.2 194.70,130.1 195.20,130.0 195.70,130.0 196.20,129.9 196.70,129.8 197.20,129.8 197.70,129.7 198.20,129.6 198.70,129.5 199.20,129.5 199.70,129.4 200.20,129.3 200.70,129.3 201.20,129.2 201.70,129.1 202.20,129.0 202.70,129.0 203.20,128.9 203.70,128.8 204.20,128.8 204.70,128.7 205.20,128.6 205.70,128.5 206.20,128.5 206.70,128.4 207.20,128.3 207.70,128.3 208.20,128.2 208.70,128.1 209.20,128.0 209.70,128.0 210.20,127.9 210.70,127.8 211.20,127.8 211.70,127.7 212.20,127.6 212.70,127.5 213.20,128.5 213.70,131.0 214.20,133.3 214.70,135.6 215.20,137.8 215.70,139.9 216.20,141.9 216.70,143.9 217.20,145.7 217.70,147.4 218.20,149.1 218.70,150.7 219.20,152.1 219.70,153.5 220.20,154.8 220.70,156.0 221.20,157.2 221.70,158.2 222.20,159.1 222.70,160.0 223.20,160.7 223.70,161.4 224.20,162.0 224.70,162.5 225.20,162.9 225.70,163.2 226.20,163.4 226.70,163.6 227.20,163.5 227.70,163.3 228.20,163.1 228.70,162.9 229.20,162.7 229.70,162.5 230.20,162.2 230.70,162.0 231.20,161.8 231.70,161.6 232.20,161.4 232.70,161.2 233.20,161.0 233.70,160.8 234.20,160.6 234.70,160.4 235.20,160.2 235.70,160.0 236.20,159.7 236.70,159.5 237.20,159.3 237.70,159.1 238.20,158.9 238.70,158.7 239.20,158.5 239.70,158.3 240.20,158.1 240.70,157.9 241.20,157.7 241.70,157.5 242.20,157.2 242.70,157.0 243.20,156.8 243.70,156.6 244.20,156.4 244.70,156.2 245.20,156.0 245.70,155.8 246.20,155.6 246.70,155.4 247.20,133.0 247.70,132.9 248.20,132.8 248.70,132.8 249.20,132.7 249.70,132.6 250.20,132.6 250.70,132.5 251.20,132.4 251.70,132.3 252.20,132.3 252.70,132.2 253.20,132.1 253.70,132.1 254.20,132.0 254.70,131.9 255.20,131.8 255.70,131.8 256.20,131.7 256.70,131.6 257.20,131.6 257.70,131.5 258.20,131.4 258.70,131.3 259.20,131.3 259.70,131.2 260.20,131.1 260.70,131.1 261.20,131.0 261.70,130.9 262.20,130.8 262.70,130.8 263.20,130.7 263.70,130.6 264.20,130.6 264.70,130.5 265.20,130.4 265.70,130.3 266.20,130.3 266.70,130.2 267.20,130.1 267.70,130.1 268.20,130.0 268.70,129.9 269.20,129.8 269.70,129.8 270.20,129.7 270.70,129.6 271.20,129.6 271.70,129.5 272.20,129.4 272.70,129.3 273.20,129.3 273.70,129.2 274.20,129.1 274.70,129.1 275.20,129.0 275.70,128.9 276.20,128.8 276.70,128.8 277.20,128.7 277.70,128.6 278.20,128.6 278.70,128.5 279.20,128.4 279.70,128.3 280.20,128.3 280.70,128.2 281.20,128.1 281.70,128.1 282.20,128.0 282.70,127.9 283.20,127.8 283.70,127.8 284.20,127.7 284.70,127.6 285.20,127.6 285.70,128.0 286.20,130.5 286.70,132.9 287.20,135.2 287.70,137.4 288.20,139.5 288.70,141.5 289.20,143.5 289.70,145.3 290.20,147.1 290.70,148.8 291.20,150.4 291.70,151.9 292.20,153.3 292.70,154.6 293.20,155.8 293.70,156.9 294.20,158.0 294.70,158.9 295.20,159.8 295.70,160.6 296.20,161.3 296.70,161.9 297.20,162.4 297.70,162.8 298.20,163.1 298.70,163.4 299.20,163.5 299.70,163.6 300.20,163.3 300.70,163.1 301.20,162.9 301.70,162.7 302.20,162.5 302.70,162.3 303.20,162.1 303.70,161.9 304.20,161.7 304.70,161.5 305.20,161.2 305.70,161.0 306.20,160.8 306.70,160.6 307.20,160.4 307.70,160.2 308.20,160.0 308.70,159.8 309.20,159.6 309.70,159.4 310.20,159.2 310.70,159.0 311.20,158.7 311.70,158.5 312.20,158.3 312.70,158.1 313.20,157.9 313.70,157.7 314.20,157.5 314.70,157.3 315.20,157.1 315.70,156.9 316.20,156.7 316.70,156.5 317.20,156.2 317.70,156.0 318.20,155.8 318.70,155.6 319.20,155.4 319.70,133.0 320.20,132.9 320.70,132.9 321.20,132.8 321.70,132.7 322.20,132.6 322.70,132.6 323.20,132.5 323.70,132.4 324.20,132.4 324.70,132.3 325.20,132.2 325.70,132.1 326.20,132.1 326.70,132.0 327.20,131.9 327.70,131.9 328.20,131.8 328.70,131.7 329.20,131.6 329.70,131.6 330.20,131.5 330.70,131.4 331.20,131.4 331.70,131.3 332.20,131.2 332.70,131.1 333.20,131.1 333.70,131.0 334.20,130.9 334.70,130.9 335.20,130.8 335.70,130.7 336.20,130.6 336.70,130.6 337.20,130.5 337.70,130.4 338.20,130.4 338.70,130.3 339.20,130.2 339.70,130.1 340.20,130.1 340.70,130.0 341.20,129.9 341.70,129.9 342.20,129.8 342.70,129.7 343.20,129.6 343.70,129.6 344.20,129.5 344.70,129.4 345.20,129.4 345.70,129.3 346.20,129.2 346.70,129.1 347.20,129.1 347.70,129.0 348.20,128.9 348.70,128.9 349.20,128.8 349.70,128.7 350.20,128.6 350.70,128.6 351.20,128.5 351.70,128.4 352.20,128.4 352.70,128.3 353.20,128.2 353.70,128.1 354.20,128.1 354.70,128.0 355.20,127.9 355.70,127.9 356.20,127.8 356.70,127.7 357.20,127.6 357.70,127.6 358.20,127.5 358.70,130.0 359.20,132.4 359.70,134.7 360.20,137.0 360.70,139.1 361.20,141.1 361.70,143.1 362.20,145.0 362.70,146.8 363.20,148.4 363.70,150.0 364.20,151.6 364.70,153.0 365.20,154.3 365.70,155.6 366.20,156.7 366.70,157.8 367.20,158.8 367.70,159.6 368.20,160.4 368.70,161.1 369.20,161.8 369.70,162.3 370.20,162.7 370.70,163.1 371.20,163.3 371.70,163.5 372.20,163.6 372.70,163.4 373.20,163.2 373.70,163.0 374.20,162.7 374.70,162.5 375.20,162.3 375.70,162.1 376.20,161.9 376.70,161.7 377.20,161.5 377.70,161.3 378.20,161.1 378.70,160.9 379.20,160.7 379.70,160.5 380.20,160.2 380.70,160.0 381.20,159.8 381.70,159.6 382.20,159.4 382.70,159.2 383.20,159.0 383.70,158.8 384.20,158.6 384.70,158.4 385.20,158.2 385.70,158.0 386.20,157.7 386.70,157.5 387.20,157.3 387.70,157.1 388.20,156.9 388.70,156.7 389.20,156.5 389.70,156.3 390.20,156.1 390.70,155.9 391.20,155.7 391.70,155.5 392.20,155.2 392.70,132.9 393.20,132.9 393.70,132.8 394.20,132.7 394.70,132.7 395.20,132.6 395.70,132.5 396.20,132.4 396.70,132.4 397.20,132.3 397.70,132.2 398.20,132.2 398.70,132.1 399.20,132.0 399.70,131.9 400.20,131.9 400.70,131.8 401.20,131.7 401.70,131.7 402.20,131.6 402.70,131.5 403.20,131.4 403.70,131.4 404.20,131.3 404.70,131.2 405.20,131.2 405.70,131.1 406.20,131.0 406.70,130.9 407.20,130.9 407.70,130.8 408.20,130.7 408.70,130.7 409.20,130.6 409.70,130.5 410.20,130.4 410.70,130.4 411.20,130.3 411.70,130.2 412.20,130.2 412.70,130.1 413.20,130.0 413.70,129.9 414.20,129.9 414.70,129.8 415.20,129.7 415.70,129.7 416.20,129.6 416.70,129.5 417.20,129.4 417.70,129.4 418.20,129.3 418.70,129.2 419.20,129.2 419.70,129.1 420.20,129.0 420.70,128.9 421.20,128.9 421.70,128.8 422.20,128.7 422.70,128.7 423.20,128.6 423.70,128.5 424.20,128.4 424.70,128.4 425.20,128.3 425.70,128.2 426.20,128.2 426.70,128.1 427.20,128.0 427.70,127.9 428.20,127.9 428.70,127.8 429.20,127.7 429.70,127.7 430.20,127.6 430.70,127.5 431.20,129.5 431.70,131.9 432.20,134.3 432.70,136.5 433.20,138.7 433.70,140.7 434.20,142.7 434.70,144.6 435.20,146.4 435.70,148.1 436.20,149.7 436.70,151.3 437.20,152.7 437.70,154.1 438.20,155.3 438.70,156.5 439.20,157.6 439.70,158.6 440.20,159.5 440.70,160.3 441.20,161.0 441.70,161.7 442.20,162.2 442.70,162.7 443.20,163.0 443.70,163.3 444.20,163.5 444.70,163.6 445.20,163.4 445.70,163.2 446.20,163.0 446.70,162.8 447.20,162.6 447.70,162.4 448.20,162.2 448.70,162.0 449.20,161.7 449.70,161.5 450.20,161.3 450.70,161.1 451.20,160.9 451.70,160.7 452.20,160.5 452.70,160.3 453.20,160.1 453.70,159.9 454.20,159.7 454.70,159.5 455.20,159.2 455.70,159.0 456.20,158.8 456.70,158.6 457.20,158.4 457.70,158.2 458.20,158.0 458.70,157.8 459.20,157.6 459.70,157.4 460.20,157.2 460.70,157.0 461.20,156.7 461.70,156.5 462.20,156.3 462.70,156.1 463.20,155.9 463.70,155.7 464.20,155.5 464.70,155.3 465.20,133.0 465.70,132.9 466.20,132.8 466.70,132.7 467.20,132.7 467.70,132.6 468.20,132.5 468.70,132.5 469.20,132.4 469.70,132.3 470.20,132.2 470.70,132.2 471.20,132.1 471.70,132.0 472.20,132.0 472.70,131.9 473.20,131.8 473.70,131.7 474.20,131.7 474.70,131.6 475.20,131.5 475.70,131.5 476.20,131.4 476.70,131.3 477.20,131.2 477.70,131.2 478.20,131.1 478.70,131.0 479.20,131.0 479.70,130.9 480.20,130.8 480.70,130.7 481.20,130.7 481.70,130.6 482.20,130.5 482.70,130.5 483.20,130.4 483.70,130.3 484.20,130.2 484.70,130.2 485.20,130.1 485.70,130.0 486.20,130.0 486.70,129.9 487.20,129.8 487.70,129.7 488.20,129.7 488.70,129.6 489.20,129.5 489.70,129.5 490.20,129.4 490.70,129.3 491.20,129.2 491.70,129.2 492.20,129.1 492.70,129.0 493.20,129.0 493.70,128.9 494.20,128.8 494.70,128.7 495.20,128.7 495.70,128.6 496.20,128.5 496.70,128.5 497.20,128.4 497.70,128.3 498.20,128.2 498.70,128.2 499.20,128.1 499.70,128.0 500.20,128.0 500.70,127.9 501.20,127.8 501.70,127.7 502.20,127.7 502.70,127.6 503.20,127.5 503.70,129.0 504.20,131.5 504.70,133.8 505.20,136.1 505.70,138.2 506.20,140.3 506.70,142.3 507.20,144.2 507.70,146.1 508.20,147.8 508.70,149.4 509.20,151.0 509.70,152.4 510.20,153.8 510.70,155.1 511.20,156.3 511.70,157.4 512.20,158.4 512.70,159.3 513.20,160.1 513.70,160.9 514.20,161.5 514.70,162.1 515.20,162.6 515.70,163.0 516.20,163.2 516.70,163.5 517.20,163.6 517.70,163.5 518.20,163.2 518.70,163.0 519.20,162.8 519.70,162.6 520.20,162.4 520.70,162.2 521.20,162.0 521.70,161.8 522.20,161.6 522.70,161.4 523.20,161.2 523.70,161.0 524.20,160.7 524.70,160.5 525.20,160.3 525.70,160.1 526.20,159.9 526.70,159.7 527.20,159.5 527.70,159.3 528.20,159.1 528.70,158.9 529.20,158.7 529.70,158.5 530.20,158.2 530.70,158.0 531.20,157.8 531.70,157.6 532.20,157.4 532.70,157.2 533.20,157.0 533.70,156.8 534.20,156.6 534.70,156.4 535.20,156.2 535.70,156.0 536.20,155.7 536.70,155.5 537.20,155.3 537.70,133.0 538.20,132.9 538.70,132.8 539.20,132.8 539.70,132.7 540.20,132.6 540.70,132.5 541.20,132.5 541.70,132.4 542.20,132.3 542.70,132.3 543.20,132.2 543.70,132.1 544.20,132.0 544.70,132.0 545.20,131.9 545.70,131.8 546.20,131.8 546.70,131.7 547.20,131.6 547.70,131.5 548.20,131.5 548.70,131.4 549.20,131.3 549.70,131.3" fill="none" stroke="#00ff00" stroke-width="1.5"/>
<path d="M87,146.7h1V155.9h-1zM88,145.1h1V155.8h-1zM89,144.5h1V153.8h-1zM90,143.4h1V151.0h-1zM91,140.3h1V151.0h-1zM92,139.4h1V149.7h-1zM93,140.0h1V149.7h-1zM94,138.3h1V147.7h-1zM95,136.4h1V147.6h-1zM96,135.2h1V145.0h-1zM97,135.3h1V145.6h-1zM98,135.8h1V145.2h-1zM99,133.7h1V144.1h-1zM100,133.3h1V142.9h-1zM101,134.0h1V142.7h-1zM102,133.5h1V142.9h-1zM103,130.5h1V141.0h-1zM104,130.7h1V140.8h-1zM105,129.5h1V140.9h-1zM106,130.6h1V139.9h-1zM107,130.7h1V140.0h-1zM108,129.4h1V139.3h-1zM109,129.9h1V139.3h-1zM110,129.3h1V136.5h-1zM111,128.7h1V137.6h-1zM112,126.1h1V136.7h-1zM113,127.9h1V137.6h-1zM114,127.7h1V135.4h-1zM115,128.0h1V136.7h-1zM116,125.4h1V134.8h-1zM117,124.9h1V135.3h-1zM118,125.1h1V135.8h-1zM119,126.9h1V134.7h-1zM120,126.0h1V134.1h-1zM121,124.1h1V134.0h-1zM122,125.0h1V135.5h-1zM123,123.9h1V135.1h-1zM124,124.5h1V133.2h-1zM125,125.4h1V135.4h-1zM126,124.3h1V135.5h-1zM127,123.9h1V133.2h-1zM128,124.5h1V133.8h-1zM129,124.4h1V134.2h-1zM130,123.0h1V132.1h-1zM131,123.6h1V133.7h-1zM132,123.1h1V132.1h-1zM133,124.5h1V134.5h-1zM134,124.2h1V134.3h-1zM135,123.1h1V132.5h-1zM136,121.9h1V134.3h-1zM137,123.2h1V131.7h-1zM138,124.4h1V131.6h-1zM139,125.4h1V132.6h-1zM140,131.2h1V139.3h-1zM141,136.8h1V146.3h-1zM142,142.6h1V153.0h-1zM143,150.2h1V161.7h-1zM144,156.5h1V169.3h-1zM145,166.0h1V173.4h-1zM146,170.9h1V183.0h-1zM147,179.9h1V188.1h-1zM148,186.0h1V195.9h-1zM149,186.4h1V195.6h-1zM150,182.4h1V191.5h-1zM151,176.4h1V187.6h-1zM152,172.1h1V183.0h-1zM153,168.2h1V180.0h-1zM154,165.1h1V174.2h-1zM155,160.4h1V171.0h-1zM156,156.4h1V166.4h-1zM157,152.1h1V161.7h-1zM158,149.6h1V161.0h-1zM159,147.8h1V158.7h-1zM160,142.7h1V152.8h-1zM161,140.4h1V150.5h-1zM162,137.8h1V149.0h-1zM163,136.4h1V148.2h-1zM164,138.1h1V147.2h-1zM165,134.7h1V146.9h-1zM166,132.4h1V144.0h-1zM167,132.1h1V141.9h-1zM168,131.9h1V142.2h-1zM169,132.6h1V141.9h-1zM170,130.1h1V142.7h-1zM171,128.6h1V140.4h-1zM172,128.1h1V139.9h-1zM173,129.8h1V138.0h-1zM174,129.4h1V139.0h-1zM175,128.5h1V137.0h-1zM176,127.5h1V139.0h-1zM177,127.1h1V136.7h-1zM178,125.9h1V135.7h-1zM179,127.6h1V138.7h-1zM180,125.6h1V135.1h-1zM181,124.6h1V136.2h-1zM182,125.5h1V135.3h-1zM183,124.8h1V135.8h-1zM184,126.7h1V136.0h-1zM185,126.5h1V137.0h-1zM186,123.7h1V134.7h-1zM187,123.5h1V135.7h-1zM188,124.5h1V136.5h-1zM189,125.5h1V136.6h-1zM190,124.9h1V133.5h-1zM191,123.7h1V133.9h-1zM192,124.7h1V134.4h-1zM193,123.8h1V133.2h-1zM194,123.1h1V133.9h-1zM195,123.9h1V134.9h-1zM196,124.9h1V133.8h-1zM197,123.2h1V133.1h-1zM198,124.4h1V135.7h-1zM199,123.7h1V135.0h-1zM200,124.6h1V133.5h-1zM201,123.7h1V134.2h-1zM202,124.5h1V133.0h-1zM203,123.3h1V133.1h-1zM204,122.1h1V135.1h-1zM205,122.6h1V132.9h-1zM206,123.7h1V134.6h-1zM207,122.7h1V133.8h-1zM208,124.7h1V134.0h-1zM209,124.3h1V132.1h-1zM210,124.2h1V133.2h-1zM211,121.4h1V135.3h-1zM212,126.2h1V137.9h-1zM213,131.6h1V143.8h-1zM214,138.2h1V149.4h-1zM215,145.3h1V157.6h-1zM216,153.8h1V161.8h-1zM217,159.8h1V169.6h-1zM218,166.3h1V178.1h-1zM219,173.0h1V182.2h-1zM220,182.3h1V189.2h-1zM221,187.5h1V196.6h-1zM222,183.0h1V193.7h-1zM223,179.6h1V188.5h-1zM224,173.3h1V185.6h-1zM225,169.3h1V179.7h-1zM226,165.6h1V175.3h-1zM227,160.7h1V171.8h-1zM228,158.8h1V166.4h-1zM229,153.2h1V164.8h-1zM230,149.8h1V160.8h-1zM231,148.4h1V159.0h-1zM232,145.5h1V156.8h-1zM233,144.5h1V154.3h-1zM234,141.8h1V149.7h-1zM235,138.6h1V148.6h-1zM236,137.0h1V147.3h-1zM237,134.9h1V145.0h-1zM238,136.1h1V145.5h-1zM239,134.8h1V145.2h-1zM240,131.1h1V143.8h-1zM241,133.2h1V142.0h-1zM242,132.5h1V142.3h-1zM243,131.0h1V139.4h-1zM244,128.5h1V141.2h-1zM245,129.6h1V138.1h-1zM246,130.2h1V138.5h-1zM247,129.5h1V137.7h-1zM248,127.7h1V139.1h-1zM249,128.2h1V136.6h-1zM250,128.2h1V138.3h-1zM251,126.3h1V138.1h-1zM252,125.1h1V136.0h-1zM253,126.0h1V136.0h-1zM254,126.0h1V137.9h-1zM255,124.3h1V136.9h-1zM256,124.3h1V136.8h-1zM257,125.3h1V135.6h-1zM258,125.9h1V135.4h-1zM259,126.2h1V137.1h-1zM260,125.9h1V136.2h-1zM261,123.4h1V133.8h-1zM262,125.6h1V136.3h-1zM263,126.1h1V133.6h-1zM264,122.7h1V133.5h-1zM265,123.3h1V134.7h-1zM266,122.5h1V135.3h-1zM267,125.0h1V135.5h-1zM268,125.1h1V134.2h-1zM269,123.9h1V135.7h-1zM270,123.2h1V135.1h-1zM271,123.0h1V132.6h-1zM272,124.2h1V135.3h-1zM273,123.2h1V134.9h-1zM274,122.2h1V133.2h-1zM275,124.5h1V132.7h-1zM276,122.1h1V134.0h-1zM277,122.1h1V134.5h-1zM278,123.3h1V132.4h-1zM279,122.5h1V135.3h-1zM280,122.8h1V133.0h-1zM281,122.0h1V133.9h-1zM282,122.8h1V133.3h-1zM283,121.7h1V132.8h-1zM284,123.8h1V132.7h-1zM285,128.8h1V138.3h-1zM286,133.6h1V146.1h-1zM287,140.6h1V150.7h-1zM288,150.1h1V158.9h-1zM289,153.7h1V165.5h-1zM290,160.5h1V170.6h-1zM291,168.5h1V179.2h-1zM292,175.5h1V186.6h-1zM293,181.9h1V193.6h-1zM294,184.4h1V193.9h-1zM295,179.1h1V190.1h-1zM296,178.0h1V187.1h-1zM297,173.6h1V182.3h-1zM298,167.9h1V177.4h-1zM299,163.0h1V173.5h-1zM300,160.0h1V169.0h-1zM301,154.8h1V165.6h-1zM302,152.5h1V164.6h-1zM303,150.5h1V159.5h-1zM304,148.5h1V158.9h-1zM305,143.6h1V154.5h-1zM306,142.3h1V151.8h-1zM307,139.7h1V149.0h-1zM308,135.5h1V147.1h-1zM309,137.6h1V147.5h-1zM310,136.4h1V145.3h-1zM311,133.6h1V145.9h-1zM312,133.2h1V145.1h-1zM313,133.6h1V144.3h-1zM314,130.1h1V140.3h-1zM315,129.1h1V141.6h-1zM316,131.2h1V138.9h-1zM317,130.1h1V139.9h-1zM318,128.7h1V140.3h-1zM319,129.9h1V138.8h-1zM320,126.2h1V139.5h-1zM321,128.8h1V137.8h-1zM322,127.8h1V139.2h-1zM323,126.0h1V138.6h-1zM324,126.8h1V137.6h-1zM325,126.1h1V137.0h-1zM326,127.0h1V136.3h-1zM327,126.2h1V137.3h-1zM328,126.2h1V137.6h-1zM329,126.9h1V136.1h-1zM330,126.4h1V134.5h-1zM331,123.9h1V137.2h-1zM332,125.6h1V133.7h-1zM333,125.9h1V133.8h-1zM334,125.6h1V136.1h-1zM335,124.8h1V136.1h-1zM336,124.8h1V135.3h-1zM337,123.6h1V136.2h-1zM338,122.7h1V134.2h-1zM339,122.7h1V136.0h-1zM340,123.6h1V135.1h-1zM341,123.5h1V134.7h-1zM342,124.9h1V135.1h-1zM343,125.1h1V134.8h-1zM344,122.4h1V135.9h-1zM345,122.3h1V133.6h-1zM346,125.0h1V135.5h-1zM347,123.5h1V134.5h-1zM348,122.0h1V134.2h-1zM349,122.5h1V133.5h-1zM350,122.7h1V133.4h-1zM351,124.0h1V134.5h-1zM352,123.0h1V132.9h-1zM353,123.1h1V134.1h-1zM354,122.3h1V132.0h-1zM355,122.6h1V133.9h-1zM356,124.5h1V133.1h-1zM357,124.9h1V136.2h-1zM358,131.6h1V141.1h-1zM359,136.6h1V146.5h-1zM360,142.8h1V155.2h-1zM361,152.6h1V161.0h-1zM362,159.5h1V166.8h-1zM363,164.7h1V174.5h-1zM364,172.2h1V181.3h-1zM365,179.9h1V186.8h-1zM366,185.4h1V195.8h-1zM367,183.8h1V192.7h-1zM368,177.5h1V187.4h-1zM369,175.0h1V186.4h-1zM370,171.4h1V182.0h-1zM371,168.0h1V176.6h-1zM372,162.4h1V172.6h-1zM373,157.3h1V168.2h-1zM374,155.3h1V164.3h-1zM375,151.8h1V160.9h-1zM376,150.1h1V158.3h-1zM377,145.1h1V157.3h-1zM378,144.8h1V154.5h-1zM379,141.1h1V150.7h-1zM380,137.3h1V149.5h-1zM381,137.9h1V146.4h-1zM382,137.9h1V147.8h-1zM383,134.4h1V144.0h-1zM384,135.6h1V143.6h-1zM385,134.1h1V142.6h-1zM386,133.6h1V141.6h-1zM387,130.9h1V141.8h-1zM388,129.3h1V141.7h-1zM389,128.3h1V139.7h-1zM390,127.5h1V139.2h-1zM391,127.3h1V138.2h-1zM392,127.1h1V139.9h-1zM393,126.5h1V138.9h-1zM394,125.6h1V137.7h-1zM395,127.0h1V136.4h-1zM396,128.2h1V137.3h-1zM397,128.0h1V136.2h-1zM398,126.8h1V137.8h-1zM399,125.9h1V135.1h-1zM400,124.8h1V136.6h-1zM401,124.4h1V135.0h-1zM402,126.9h1V134.4h-1zM403,124.2h1V137.3h-1zM404,126.3h1V133.8h-1zM405,126.4h1V134.3h-1zM406,123.5h1V136.1h-1zM407,125.7h1V134.0h-1zM408,123.1h1V134.4h-1zM409,125.8h1V134.2h-1zM410,124.9h1V135.9h-1zM411,125.4h1V134.1h-1zM412,122.4h1V133.4h-1zM413,125.5h1V136.0h-1zM414,124.2h1V132.8h-1zM415,123.2h1V133.8h-1zM416,125.0h1V133.7h-1zM417,122.6h1V134.8h-1zM418,124.6h1V132.9h-1zM419,122.9h1V133.0h-1zM420,121.9h1V134.9h-1zM421,123.2h1V134.6h-1zM422,123.9h1V133.5h-1zM423,123.8h1V133.8h-1zM424,121.6h1V132.6h-1zM425,123.3h1V132.6h-1zM426,122.2h1V135.2h-1zM427,123.8h1V133.6h-1zM428,123.0h1V134.9h-1zM429,122.2h1V134.1h-1zM430,127.9h1V138.4h-1zM431,134.2h1V143.0h-1zM432,141.7h1V151.1h-1zM433,147.2h1V157.5h-1zM434,154.2h1V163.3h-1zM435,158.5h1V171.0h-1zM436,165.6h1V177.9h-1zM437,172.7h1V182.2h-1zM438,179.2h1V191.7h-1zM439,183.5h1V195.6h-1zM440,180.6h1V189.7h-1zM441,176.5h1V188.2h-1zM442,173.1h1V182.1h-1zM443,168.5h1V180.1h-1zM444,164.4h1V175.7h-1zM445,162.5h1V172.2h-1zM446,157.6h1V167.8h-1zM447,152.6h1V164.5h-1zM448,152.1h1V161.9h-1zM449,149.8h1V159.3h-1zM450,146.6h1V156.3h-1zM451,142.9h1V151.5h-1zM452,139.8h1V151.3h-1zM453,137.4h1V147.2h-1zM454,135.9h1V148.9h-1zM455,135.8h1V145.9h-1zM456,134.1h1V144.5h-1zM457,133.6h1V144.5h-1zM458,133.9h1V142.0h-1zM459,131.8h1V142.3h-1zM460,132.5h1V141.4h-1zM461,128.8h1V141.7h-1zM462,131.2h1V139.2h-1zM463,127.3h1V140.9h-1zM464,129.4h1V138.5h-1zM465,127.4h1V137.8h-1zM466,126.3h1V137.9h-1zM467,126.8h1V139.0h-1zM468,128.5h1V137.2h-1zM469,127.4h1V137.6h-1zM470,125.4h1V137.2h-1zM471,127.6h1V135.9h-1zM472,127.4h1V134.6h-1zM473,125.1h1V136.9h-1zM474,123.9h1V134.7h-1zM475,123.5h1V137.3h-1zM476,124.1h1V136.6h-1zM477,125.2h1V137.0h-1zM478,124.4h1V134.5h-1zM479,125.6h1V135.9h-1zM480,122.8h1V135.8h-1zM481,125.2h1V134.7h-1zM482,124.5h1V133.4h-1zM483,123.7h1V134.6h-1zM484,123.9h1V136.3h-1zM485,122.3h1V134.3h-1zM486,125.0h1V133.6h-1zM487,125.5h1V134.0h-1zM488,122.7h1V134.1h-1zM489,122.0h1V135.0h-1zM490,125.1h1V133.9h-1zM491,124.1h1V133.9h-1zM492,122.7h1V133.7h-1zM493,123.2h1V134.9h-1zM494,122.6h1V132.4h-1zM495,124.0h1V132.4h-1zM496,122.0h1V133.1h-1zM497,125.0h1V133.7h-1zM498,122.4h1V132.5h-1zM499,123.5h1V132.0h-1zM500,122.3h1V133.2h-1zM501,123.9h1V133.0h-1zM502,124.4h1V135.2h-1zM503,131.2h1V140.6h-1zM504,135.3h1V144.9h-1zM505,142.5h1V153.4h-1zM506,146.5h1V158.9h-1zM507,154.7h1V163.2h-1zM508,159.3h1V171.4h-1zM509,168.9h1V178.8h-1zM510,173.0h1V184.5h-1zM511,181.3h1V190.8h-1zM512,181.3h1V190.7h-1zM513,175.5h1V186.8h-1zM514,173.3h1V183.1h-1zM515,167.9h1V179.9h-1zM516,167.1h1V177.4h-1zM517,162.0h1V172.4h-1zM518,157.3h1V169.6h-1zM519,154.4h1V165.0h-1zM520,151.0h1V163.1h-1zM521,150.6h1V160.6h-1zM522,145.6h1V156.7h-1zM523,145.3h1V152.8h-1zM524,141.8h1V150.4h-1zM525,139.5h1V150.2h-1zM526,135.2h1V145.5h-1zM527,135.0h1V148.0h-1zM528,135.1h1V146.0h-1zM529,135.5h1V145.5h-1zM530,133.7h1V142.8h-1zM531,131.9h1V144.1h-1zM532,129.6h1V143.2h-1zM533,129.2h1V140.9h-1zM534,128.6h1V138.8h-1zM535,130.2h1V139.5h-1zM536,129.0h1V140.4h-1zM537,129.6h1V137.1h-1zM538,129.4h1V137.5h-1zM539,127.3h1V136.6h-1zM540,128.4h1V139.2h-1zM541,125.8h1V137.8h-1zM542,127.3h1V137.9h-1zM543,125.9h1V137.5h-1zM544,125.1h1V135.2h-1zM545,124.9h1V134.7h-1zM546,124.3h1V137.7h-1zM547,124.5h1V136.2h-1zM548,125.9h1V135.3h-1zM549,125.9h1V135.8h-1zM87,151.6h1V154.0h-1zM87,147.9h1V154.0h-1zM88,147.9h1V151.2h-1zM88,137.9h1V151.2h-1zM89,137.9h1V148.4h-1zM89,140.6h1V148.4h-1zM90,140.6h1V146.8h-1zM90,141.6h1V146.8h-1zM91,141.6h1V157.0h-1zM91,138.3h1V157.0h-1zM92,138.3h1V143.1h-1zM92,138.0h1V143.1h-1zM93,138.0h1V141.1h-1zM93,136.3h1V141.1h-1zM94,136.3h1V146.4h-1zM94,144.0h1V151.3h-1zM95,139.1h1V151.3h-1zM95,136.2h1V141.5h-1zM96,136.2h1V149.8h-1zM96,142.2h1V149.8h-1zM97,142.1h1V144.6h-1zM97,140.0h1V144.5h-1zM98,133.0h1V142.4h-1zM98,133.0h1V137.8h-1zM99,135.4h1V141.1h-1zM99,134.0h1V141.1h-1zM100,134.0h1V142.1h-1zM100,128.8h1V142.1h-1zM101,128.8h1V140.3h-1zM101,133.1h1V140.3h-1zM102,133.1h1V137.9h-1zM102,129.9h1V137.9h-1zM103,128.6h1V132.3h-1zM103,128.6h1V136.9h-1zM104,134.5h1V145.3h-1zM104,140.0h1V145.3h-1zM105,128.5h1V142.4h-1zM105,128.5h1V136.0h-1zM106,133.6h1V138.1h-1zM106,132.8h1V138.1h-1zM107,132.8h1V147.5h-1zM107,135.8h1V147.5h-1zM108,129.2h1V138.2h-1zM108,129.2h1V135.8h-1zM109,125.4h1V135.8h-1zM109,125.4h1V136.9h-1zM110,134.5h1V137.5h-1zM110,124.2h1V137.5h-1zM111,124.2h1V140.7h-1zM111,122.3h1V140.7h-1zM112,122.3h1V136.1h-1zM112,120.7h1V136.1h-1zM113,120.7h1V142.5h-1zM113,123.8h1V142.5h-1zM114,121.7h1V126.2h-1zM114,121.7h1V139.2h-1zM115,121.3h1V139.2h-1zM115,121.3h1V138.8h-1zM116,125.7h1V138.8h-1zM116,125.7h1V138.2h-1zM117,135.8h1V142.9h-1zM117,137.6h1V142.9h-1zM118,123.8h1V140.0h-1zM118,120.9h1V126.2h-1zM119,120.9h1V132.0h-1zM119,121.6h1V132.0h-1zM120,121.6h1V139.6h-1zM120,132.9h1V139.6h-1zM121,126.4h1V135.3h-1zM121,126.4h1V135.9h-1zM122,130.8h1V135.9h-1zM122,130.8h1V140.1h-1zM123,134.4h1V140.1h-1zM123,127.9h1V136.8h-1zM124,119.1h1V130.3h-1zM124,119.1h1V137.5h-1zM125,135.1h1V138.6h-1zM125,136.2h1V141.1h-1zM126,119.5h1V141.1h-1zM126,119.5h1V130.9h-1zM127,128.5h1V137.1h-1zM127,121.6h1V137.1h-1zM128,121.5h1V124.0h-1zM128,121.5h1V130.0h-1zM129,120.2h1V130.0h-1zM129,120.2h1V129.5h-1zM130,121.5h1V129.5h-1zM130,121.5h1V131.2h-1zM131,128.8h1V138.5h-1zM131,119.7h1V138.5h-1zM132,119.7h1V125.5h-1zM132,119.3h1V125.5h-1zM133,119.3h1V132.6h-1zM133,122.2h1V132.6h-1zM134,122.2h1V130.6h-1zM134,122.4h1V130.6h-1zM135,122.4h1V133.6h-1zM135,119.7h1V133.6h-1zM136,118.1h1V122.1h-1zM136,118.1h1V134.7h-1zM137,121.4h1V134.7h-1zM137,121.4h1V138.2h-1zM138,125.3h1V138.2h-1zM138,118.3h1V127.7h-1zM139,118.3h1V121.1h-1zM139,118.7h1V128.2h-1zM140,125.8h1V133.7h-1zM140,131.3h1V134.8h-1zM141,132.4h1V134.8h-1zM141,132.4h1V148.7h-1zM142,146.3h1V160.3h-1zM142,144.7h1V160.3h-1zM143,144.7h1V160.1h-1zM143,157.7h1V161.6h-1zM144,150.0h1V161.6h-1zM144,150.0h1V166.3h-1zM145,163.9h1V178.5h-1zM145,172.7h1V178.5h-1zM146,171.9h1V175.1h-1zM146,171.9h1V179.0h-1zM147,176.6h1V179.5h-1zM147,172.0h1V179.5h-1zM148,172.0h1V194.0h-1zM148,191.6h1V200.6h-1zM149,193.2h1V200.6h-1zM149,192.2h1V195.6h-1zM150,189.6h1V194.6h-1zM150,188.5h1V192.0h-1zM151,188.5h1V194.6h-1zM151,172.7h1V194.6h-1zM152,168.1h1V175.1h-1zM152,168.1h1V183.2h-1zM153,172.8h1V183.2h-1zM153,172.8h1V178.2h-1zM154,165.8h1V178.2h-1zM154,161.7h1V168.2h-1zM155,161.7h1V176.8h-1zM155,157.7h1V176.8h-1zM156,157.7h1V169.0h-1zM156,166.6h1V170.4h-1zM157,161.7h1V170.4h-1zM157,144.3h1V164.1h-1zM158,144.3h1V162.3h-1zM158,158.9h1V162.3h-1zM159,154.1h1V161.3h-1zM159,142.6h1V156.5h-1zM160,142.6h1V160.3h-1zM160,150.7h1V160.3h-1zM161,150.7h1V155.8h-1zM161,138.7h1V155.8h-1zM162,138.7h1V149.5h-1zM162,145.9h1V149.5h-1zM163,143.3h1V148.3h-1zM163,140.2h1V145.7h-1zM164,140.2h1V152.3h-1zM164,145.9h1V152.3h-1zM165,132.8h1V148.3h-1zM165,130.3h1V135.2h-1zM166,130.3h1V148.7h-1zM166,142.1h1V148.7h-1zM167,142.1h1V149.6h-1zM167,134.1h1V149.6h-1zM168,131.5h1V136.5h-1zM168,131.5h1V135.4h-1zM169,133.0h1V145.0h-1zM169,128.5h1V145.0h-1zM170,128.5h1V147.4h-1zM170,135.6h1V147.4h-1zM171,135.6h1V141.1h-1zM171,131.3h1V141.1h-1zM172,131.3h1V138.5h-1zM172,136.1h1V141.6h-1zM173,138.4h1V141.6h-1zM173,138.4h1V142.8h-1zM174,129.4h1V142.8h-1zM174,126.1h1V131.8h-1zM175,126.1h1V144.4h-1zM175,142.0h1V146.6h-1zM176,141.0h1V146.6h-1zM176,124.2h1V143.4h-1zM177,123.5h1V126.6h-1zM177,123.5h1V141.9h-1zM178,132.0h1V141.9h-1zM178,121.1h1V134.4h-1zM179,121.1h1V140.2h-1zM179,123.3h1V140.2h-1zM180,121.6h1V125.7h-1zM180,121.6h1V124.5h-1zM181,122.1h1V136.8h-1zM181,125.9h1V136.8h-1zM182,125.9h1V130.1h-1zM182,121.7h1V130.1h-1zM183,121.7h1V127.8h-1zM183,125.4h1V142.3h-1zM184,135.9h1V142.3h-1zM184,135.9h1V140.1h-1zM185,137.3h1V140.1h-1zM185,132.1h1V139.7h-1zM186,132.1h1V135.7h-1zM186,133.3h1V136.2h-1zM187,124.5h1V136.2h-1zM187,124.5h1V129.8h-1zM188,127.4h1V130.2h-1zM188,127.8h1V134.8h-1zM189,121.1h1V134.8h-1zM189,121.1h1V125.6h-1zM190,118.3h1V125.6h-1zM190,118.3h1V131.5h-1zM191,129.1h1V136.1h-1zM191,120.2h1V136.1h-1zM192,120.2h1V122.6h-1zM192,120.2h1V139.5h-1zM193,124.0h1V139.5h-1zM193,124.0h1V130.8h-1zM194,121.6h1V130.8h-1zM194,121.6h1V138.5h-1zM195,119.5h1V138.5h-1zM195,119.5h1V123.6h-1zM196,119.2h1V123.6h-1zM196,119.2h1V139.6h-1zM197,133.5h1V139.6h-1zM197,120.7h1V135.9h-1zM198,120.7h1V123.3h-1zM198,120.9h1V134.0h-1zM199,127.2h1V134.0h-1zM199,119.6h1V129.6h-1zM200,119.6h1V133.3h-1zM200,130.9h1V138.6h-1zM201,133.4h1V138.6h-1zM201,124.3h1V135.8h-1zM202,124.3h1V130.1h-1zM202,127.6h1V130.1h-1zM203,127.6h1V139.6h-1zM203,123.6h1V139.6h-1zM204,122.7h1V126.0h-1zM204,122.7h1V125.8h-1zM205,123.4h1V131.1h-1zM205,123.1h1V131.1h-1zM206,123.1h1V135.2h-1zM206,125.6h1V135.2h-1zM207,125.6h1V137.8h-1zM207,135.4h1V137.9h-1zM208,118.1h1V137.9h-1zM208,118.1h1V132.4h-1zM209,118.3h1V132.4h-1zM209,118.2h1V120.7h-1zM210,118.2h1V125.7h-1zM210,119.3h1V125.7h-1zM211,119.3h1V129.9h-1zM211,124.2h1V129.9h-1zM212,124.2h1V132.8h-1zM212,130.4h1V137.2h-1zM213,130.9h1V137.2h-1zM213,130.9h1V137.0h-1zM214,134.6h1V150.6h-1zM214,137.5h1V150.6h-1zM215,137.5h1V140.7h-1zM215,138.3h1V141.6h-1zM216,139.2h1V162.2h-1zM216,159.8h1V170.2h-1zM217,149.2h1V170.2h-1zM217,149.2h1V168.8h-1zM218,158.8h1V168.8h-1zM218,158.8h1V171.2h-1zM219,168.8h1V171.5h-1zM219,169.1h1V173.7h-1zM220,171.3h1V192.0h-1zM220,183.3h1V192.0h-1zM221,183.3h1V196.3h-1zM221,193.9h1V196.7h-1zM222,186.7h1V196.7h-1zM222,186.7h1V193.6h-1zM223,185.4h1V193.6h-1zM223,185.1h1V187.8h-1zM224,182.3h1V187.5h-1zM224,167.9h1V184.7h-1zM225,167.9h1V171.6h-1zM225,166.0h1V171.6h-1zM226,166.0h1V171.4h-1zM226,165.4h1V171.4h-1zM227,165.4h1V179.1h-1zM227,162.6h1V179.1h-1zM228,162.6h1V175.1h-1zM228,170.4h1V175.1h-1zM229,150.4h1V172.8h-1zM229,150.4h1V168.7h-1zM230,146.8h1V168.7h-1zM230,146.8h1V155.5h-1zM231,153.1h1V168.0h-1zM231,145.0h1V168.0h-1zM232,145.0h1V162.4h-1zM232,139.9h1V162.4h-1zM233,137.7h1V142.3h-1zM233,137.7h1V156.4h-1zM234,148.2h1V156.4h-1zM234,148.1h1V150.6h-1zM235,148.1h1V150.6h-1zM235,140.2h1V150.6h-1zM236,132.8h1V142.6h-1zM236,132.8h1V151.7h-1zM237,145.0h1V151.7h-1zM237,145.0h1V150.0h-1zM238,141.8h1V150.0h-1zM238,137.9h1V144.2h-1zM239,137.9h1V142.4h-1zM239,140.0h1V146.0h-1zM240,135.5h1V146.0h-1zM240,135.5h1V143.2h-1zM241,140.8h1V145.0h-1zM241,122.0h1V145.0h-1zM242,122.0h1V130.7h-1zM242,128.3h1V145.8h-1zM243,129.0h1V145.8h-1zM243,129.0h1V134.3h-1zM244,131.9h1V136.0h-1zM244,133.6h1V136.5h-1zM245,134.1h1V144.7h-1zM245,142.3h1V144.9h-1zM246,128.5h1V144.9h-1zM246,128.5h1V134.6h-1zM247,132.2h1V147.6h-1zM247,126.7h1V147.6h-1zM248,126.7h1V145.9h-1zM248,131.1h1V145.9h-1zM249,131.1h1V139.6h-1zM249,122.5h1V139.6h-1zM250,122.5h1V129.9h-1zM250,127.5h1V137.5h-1zM251,133.0h1V137.5h-1zM251,122.7h1V135.4h-1zM252,122.7h1V136.9h-1zM252,134.5h1V141.1h-1zM253,137.0h1V141.1h-1zM253,123.1h1V139.4h-1zM254,123.1h1V125.5h-1zM254,123.1h1V141.6h-1zM255,133.2h1V141.6h-1zM255,130.1h1V135.6h-1zM256,124.9h1V132.5h-1zM256,121.5h1V127.3h-1zM257,116.4h1V123.9h-1zM257,116.4h1V134.4h-1zM258,132.0h1V138.0h-1zM258,124.3h1V138.0h-1zM259,123.1h1V126.7h-1zM259,118.7h1V125.5h-1zM260,118.7h1V141.2h-1zM260,127.8h1V141.2h-1zM261,122.8h1V130.2h-1zM261,119.6h1V125.2h-1zM262,119.6h1V122.0h-1zM262,119.6h1V133.9h-1zM263,122.7h1V133.9h-1zM263,122.7h1V139.3h-1zM264,130.1h1V139.3h-1zM264,130.1h1V134.3h-1zM265,129.3h1V134.3h-1zM265,123.4h1V131.7h-1zM266,123.4h1V138.3h-1zM266,121.8h1V138.3h-1zM267,121.8h1V131.7h-1zM267,129.3h1V136.8h-1zM268,118.4h1V136.8h-1zM268,118.4h1V129.8h-1zM269,127.4h1V132.4h-1zM269,130.0h1V137.5h-1zM270,135.1h1V140.2h-1zM270,135.7h1V140.2h-1zM271,116.2h1V138.1h-1zM271,116.2h1V125.6h-1zM272,114.2h1V125.6h-1zM272,114.2h1V125.3h-1zM273,122.9h1V127.3h-1zM273,124.9h1V139.8h-1zM274,131.3h1V139.8h-1zM274,130.5h1V133.7h-1zM275,123.3h1V132.9h-1zM275,123.3h1V126.8h-1zM276,124.4h1V136.7h-1zM276,124.4h1V136.7h-1zM277,118.4h1V126.8h-1zM277,117.5h1V120.8h-1zM278,117.5h1V136.3h-1zM278,133.9h1V139.0h-1zM279,136.4h1V139.0h-1zM279,134.2h1V138.8h-1zM280,132.0h1V136.6h-1zM280,118.2h1V134.4h-1zM281,118.2h1V126.8h-1zM281,124.4h1V136.3h-1zM282,118.2h1V136.3h-1zM282,118.2h1V128.0h-1zM283,119.4h1V128.0h-1zM283,119.4h1V130.8h-1zM284,128.4h1V139.9h-1zM284,124.2h1V139.9h-1zM285,124.2h1V135.7h-1zM285,133.3h1V136.1h-1zM286,133.7h1V148.9h-1zM286,136.1h1V148.9h-1zM287,136.1h1V148.7h-1zM287,146.3h1V152.4h-1zM288,150.0h1V154.5h-1zM288,152.1h1V157.9h-1zM289,155.5h1V165.3h-1zM289,155.7h1V165.3h-1zM290,155.7h1V176.2h-1zM290,169.9h1V176.2h-1zM291,169.9h1V179.3h-1zM291,173.7h1V179.3h-1zM292,171.5h1V176.1h-1zM292,171.5h1V177.0h-1zM293,174.6h1V191.8h-1zM293,189.4h1V194.4h-1zM294,188.0h1V194.4h-1zM294,178.7h1V190.4h-1zM295,178.7h1V186.6h-1zM295,184.2h1V189.7h-1zM296,186.4h1V189.7h-1zM296,181.8h1V188.8h-1zM297,181.8h1V185.8h-1zM297,183.4h1V187.3h-1zM298,164.2h1V187.3h-1zM298,163.6h1V166.6h-1zM299,163.6h1V179.3h-1zM299,172.7h1V179.3h-1zM300,157.9h1V175.1h-1zM300,157.9h1V173.8h-1zM301,160.4h1V173.8h-1zM301,154.6h1V162.8h-1zM302,154.6h1V164.9h-1zM302,161.6h1V164.9h-1zM303,157.4h1V164.0h-1zM303,154.8h1V159.8h-1zM304,151.8h1V157.2h-1zM304,147.7h1V154.2h-1zM305,147.7h1V160.3h-1zM305,154.3h1V160.3h-1zM306,144.2h1V156.7h-1zM306,144.2h1V154.4h-1zM307,143.1h1V154.4h-1zM307,143.1h1V153.6h-1zM308,149.7h1V153.6h-1zM308,149.7h1V153.7h-1zM309,144.4h1V153.7h-1zM309,141.5h1V146.8h-1zM310,134.4h1V143.9h-1zM310,134.4h1V146.5h-1zM311,142.1h1V146.5h-1zM311,138.2h1V144.5h-1zM312,133.0h1V140.6h-1zM312,127.8h1V135.4h-1zM313,127.8h1V138.5h-1zM313,136.1h1V147.9h-1zM314,137.1h1V147.9h-1zM314,137.1h1V145.3h-1zM315,125.3h1V145.3h-1zM315,125.3h1V138.0h-1zM316,135.6h1V147.1h-1zM316,144.0h1V147.1h-1zM317,126.1h1V146.4h-1zM317,126.1h1V143.2h-1zM318,127.7h1V143.2h-1zM318,127.7h1V143.7h-1zM319,131.6h1V143.7h-1zM319,131.6h1V143.9h-1zM320,138.9h1V143.9h-1zM320,125.3h1V141.3h-1zM321,125.3h1V132.0h-1zM321,123.5h1V132.0h-1zM322,123.5h1V143.4h-1zM322,123.1h1V143.4h-1zM323,123.1h1V131.3h-1zM323,128.2h1V131.3h-1zM324,128.2h1V133.9h-1zM324,131.5h1V138.2h-1zM325,135.8h1V139.7h-1zM325,122.5h1V139.7h-1zM326,122.5h1V132.0h-1zM326,121.1h1V132.0h-1zM327,121.1h1V123.9h-1zM327,121.5h1V137.8h-1zM328,123.9h1V137.8h-1zM328,123.9h1V134.3h-1zM329,120.0h1V134.3h-1zM329,120.0h1V140.8h-1zM330,122.8h1V140.8h-1zM330,122.8h1V132.6h-1zM331,130.2h1V141.9h-1zM331,124.7h1V141.9h-1zM332,124.7h1V132.7h-1zM332,122.1h1V132.7h-1zM333,122.1h1V137.8h-1zM333,119.5h1V137.8h-1zM334,119.5h1V130.5h-1zM334,128.1h1V139.0h-1zM335,130.0h1V139.0h-1zM335,130.0h1V133.3h-1zM336,130.9h1V139.2h-1zM336,122.2h1V139.2h-1zM337,122.2h1V125.0h-1zM337,122.6h1V132.7h-1zM338,129.9h1V132.7h-1zM338,129.9h1V140.6h-1zM339,123.8h1V140.6h-1zM339,123.1h1V126.2h-1zM340,123.1h1V139.6h-1zM340,135.7h1V139.6h-1zM341,122.5h1V138.1h-1zM341,122.5h1V134.7h-1zM342,131.8h1V134.7h-1zM342,129.9h1V134.2h-1zM343,121.8h1V132.3h-1zM343,121.8h1V138.6h-1zM344,132.3h1V138.6h-1zM344,113.7h1V134.7h-1zM345,113.7h1V142.6h-1zM345,133.3h1V142.6h-1zM346,132.7h1V135.7h-1zM346,132.7h1V137.5h-1zM347,129.8h1V137.5h-1zM347,129.8h1V138.1h-1zM348,135.7h1V142.2h-1zM348,118.7h1V142.2h-1zM349,118.7h1V126.2h-1zM349,117.0h1V126.2h-1zM350,117.0h1V129.0h-1zM350,126.6h1V131.5h-1zM351,116.9h1V131.5h-1zM351,116.9h1V128.2h-1zM352,125.8h1V138.0h-1zM352,132.3h1V138.0h-1zM353,121.2h1V134.7h-1zM353,121.2h1V139.8h-1zM354,121.6h1V139.8h-1zM354,121.6h1V125.2h-1zM355,122.6h1V125.2h-1zM355,122.6h1V127.1h-1zM356,118.4h1V127.1h-1zM356,118.4h1V120.8h-1zM357,118.4h1V124.7h-1zM357,121.3h1V124.7h-1zM358,121.3h1V145.1h-1zM358,133.4h1V145.1h-1zM359,133.4h1V137.0h-1zM359,134.6h1V154.9h-1zM360,137.4h1V154.9h-1zM360,137.4h1V158.0h-1zM361,154.8h1V158.0h-1zM361,154.8h1V162.5h-1zM362,159.7h1V162.5h-1zM362,157.0h1V162.1h-1zM363,157.0h1V171.8h-1zM363,169.4h1V182.4h-1zM364,168.9h1V182.4h-1zM364,168.9h1V180.0h-1zM365,172.1h1V180.0h-1zM365,172.1h1V195.0h-1zM366,192.6h1V197.5h-1zM366,190.2h1V197.5h-1zM367,190.2h1V201.5h-1zM367,182.5h1V201.5h-1zM368,182.5h1V192.0h-1zM368,174.2h1V192.0h-1zM369,174.2h1V191.7h-1zM369,189.3h1V192.4h-1zM370,175.6h1V192.4h-1zM370,175.6h1V178.8h-1zM371,171.0h1V178.8h-1zM371,167.4h1V173.4h-1zM372,162.0h1V169.8h-1zM372,157.9h1V164.4h-1zM373,157.9h1V170.3h-1zM373,167.9h1V170.8h-1zM374,153.7h1V170.8h-1zM374,153.7h1V157.8h-1zM375,146.5h1V157.8h-1zM375,146.5h1V166.2h-1zM376,152.4h1V166.2h-1zM376,144.1h1V154.8h-1zM377,144.1h1V160.6h-1zM377,146.0h1V160.6h-1zM378,144.0h1V148.4h-1zM378,144.0h1V154.9h-1zM379,141.1h1V154.9h-1zM379,138.2h1V143.5h-1zM380,138.2h1V145.4h-1zM380,142.1h1V145.4h-1zM381,142.1h1V148.0h-1zM381,139.8h1V148.0h-1zM382,139.8h1V150.9h-1zM382,136.9h1V150.9h-1zM383,134.5h1V139.3h-1zM383,134.5h1V150.1h-1zM384,144.9h1V150.1h-1zM384,137.4h1V147.3h-1zM385,129.1h1V139.8h-1zM385,129.1h1V146.2h-1zM386,131.0h1V146.2h-1zM386,128.6h1V133.4h-1zM387,128.6h1V143.4h-1zM387,130.6h1V143.4h-1zM388,130.6h1V133.6h-1zM388,131.2h1V142.9h-1zM389,139.7h1V142.9h-1zM389,128.8h1V142.1h-1zM390,128.8h1V138.6h-1zM390,131.8h1V138.6h-1zM391,123.9h1V134.2h-1zM391,123.9h1V135.8h-1zM392,122.6h1V135.8h-1zM392,122.6h1V125.4h-1zM393,123.0h1V140.1h-1zM393,125.8h1V140.1h-1zM394,125.8h1V132.8h-1zM394,129.7h1V132.8h-1zM395,129.7h1V143.1h-1zM395,132.4h1V143.1h-1zM396,132.4h1V143.0h-1zM396,125.7h1V143.0h-1zM397,125.7h1V134.0h-1zM397,127.2h1V134.0h-1zM398,123.6h1V129.6h-1zM398,123.6h1V136.1h-1zM399,133.7h1V141.0h-1zM399,135.3h1V141.0h-1zM400,135.3h1V142.6h-1zM400,123.2h1V142.6h-1zM401,123.2h1V131.4h-1zM401,129.0h1V133.8h-1zM402,122.0h1V133.8h-1zM402,122.0h1V138.5h-1zM403,124.4h1V138.5h-1zM403,124.4h1V133.8h-1zM404,123.0h1V133.8h-1zM404,123.0h1V135.3h-1zM405,129.8h1V135.3h-1zM405,125.8h1V132.2h-1zM406,125.8h1V141.6h-1zM406,135.8h1V141.6h-1zM407,123.9h1V138.2h-1zM407,123.9h1V128.6h-1zM408,126.2h1V132.0h-1zM408,120.7h1V132.0h-1zM409,120.7h1V136.5h-1zM409,134.1h1V141.1h-1zM410,117.2h1V141.1h-1zM410,117.2h1V134.2h-1zM411,126.4h1V134.2h-1zM411,118.0h1V128.8h-1zM412,118.0h1V144.1h-1zM412,129.9h1V144.1h-1zM413,117.9h1V132.3h-1zM413,117.9h1V134.6h-1zM414,120.3h1V134.6h-1zM414,120.3h1V140.0h-1zM415,127.9h1V140.0h-1zM415,123.8h1V130.3h-1zM416,121.3h1V126.2h-1zM416,121.3h1V135.5h-1zM417,122.8h1V135.5h-1zM417,122.8h1V127.1h-1zM418,124.6h1V127.1h-1zM418,124.6h1V140.2h-1zM419,126.1h1V140.2h-1zM419,126.1h1V135.5h-1zM420,130.2h1V135.5h-1zM420,130.2h1V139.5h-1zM421,135.9h1V139.5h-1zM421,126.3h1V138.3h-1zM422,122.2h1V128.7h-1zM422,121.0h1V124.6h-1zM423,121.0h1V131.4h-1zM423,120.8h1V131.4h-1zM424,120.8h1V136.9h-1zM424,120.2h1V136.9h-1zM425,120.2h1V130.7h-1zM425,128.3h1V139.5h-1zM426,124.3h1V139.5h-1zM426,124.3h1V127.5h-1zM427,120.9h1V127.5h-1zM427,120.9h1V124.1h-1zM428,121.7h1V137.5h-1zM428,127.4h1V137.5h-1zM429,127.4h1V134.1h-1zM429,117.9h1V134.1h-1zM430,117.9h1V137.5h-1zM430,126.0h1V137.5h-1zM431,126.0h1V137.4h-1zM431,135.0h1V138.1h-1zM432,135.3h1V138.1h-1zM432,135.3h1V138.2h-1zM433,135.8h1V161.2h-1zM433,149.3h1V161.2h-1zM434,149.3h1V155.6h-1zM434,153.2h1V158.1h-1zM435,155.7h1V166.7h-1zM435,164.3h1V171.5h-1zM436,169.0h1V171.5h-1zM436,169.0h1V184.1h-1zM437,181.7h1V187.9h-1zM437,185.5h1V192.5h-1zM438,176.3h1V192.5h-1zM438,176.3h1V196.2h-1zM439,185.7h1V196.2h-1zM439,184.2h1V188.1h-1zM440,184.2h1V200.2h-1zM440,186.9h1V200.2h-1zM441,185.9h1V189.3h-1zM441,180.1h1V188.3h-1zM442,177.0h1V182.5h-1zM442,177.0h1V184.2h-1zM443,166.5h1V184.2h-1zM443,166.5h1V169.9h-1zM444,167.5h1V171.1h-1zM444,164.9h1V171.1h-1zM445,162.1h1V167.3h-1zM445,162.1h1V170.2h-1zM446,163.1h1V170.2h-1zM446,156.5h1V165.5h-1zM447,156.5h1V164.6h-1zM447,162.2h1V168.6h-1zM448,149.5h1V168.6h-1zM448,146.6h1V151.9h-1zM449,146.6h1V152.7h-1zM449,150.3h1V154.8h-1zM450,151.2h1V154.8h-1zM450,149.5h1V153.6h-1zM451,139.9h1V151.9h-1zM451,139.9h1V145.9h-1zM452,139.8h1V145.9h-1zM452,139.8h1V146.7h-1zM453,141.3h1V146.7h-1zM453,141.3h1V150.4h-1zM454,143.7h1V150.4h-1zM454,131.0h1V146.1h-1zM455,131.0h1V149.2h-1zM455,135.3h1V149.2h-1zM456,135.3h1V147.1h-1zM456,142.1h1V147.1h-1zM457,142.1h1V147.6h-1zM457,130.4h1V147.6h-1zM458,130.4h1V146.7h-1zM458,129.4h1V146.7h-1zM459,129.4h1V138.1h-1zM459,129.2h1V138.1h-1zM460,129.2h1V140.3h-1zM460,137.9h1V142.4h-1zM461,126.6h1V142.4h-1zM461,126.6h1V135.0h-1zM462,132.6h1V135.2h-1zM462,120.8h1V135.2h-1zM463,120.8h1V139.3h-1zM463,126.7h1V139.3h-1zM464,126.7h1V139.0h-1zM464,136.6h1V143.9h-1zM465,139.4h1V143.9h-1zM465,135.9h1V141.8h-1zM466,135.9h1V139.2h-1zM466,131.8h1V139.2h-1zM467,128.1h1V134.2h-1zM467,128.1h1V134.7h-1zM468,122.3h1V134.7h-1zM468,122.3h1V136.9h-1zM469,134.5h1V138.5h-1zM469,134.5h1V138.5h-1zM470,134.5h1V138.0h-1zM470,127.9h1V138.0h-1zM471,125.0h1V130.3h-1zM471,124.3h1V127.4h-1zM472,124.3h1V131.4h-1zM472,118.2h1V131.4h-1zM473,118.2h1V133.3h-1zM473,130.9h1V139.5h-1zM474,126.9h1V139.5h-1zM474,126.9h1V140.0h-1zM475,120.4h1V140.0h-1zM475,120.4h1V130.0h-1zM476,127.6h1V139.0h-1zM476,122.6h1V139.0h-1zM477,122.6h1V126.1h-1zM477,123.7h1V130.3h-1zM478,127.9h1V133.2h-1zM478,130.8h1V138.1h-1zM479,135.7h1V144.3h-1zM479,132.0h1V144.3h-1zM480,132.0h1V140.0h-1zM480,123.1h1V140.0h-1zM481,121.9h1V125.5h-1zM481,121.9h1V133.5h-1zM482,118.1h1V133.5h-1zM482,118.1h1V133.2h-1zM483,118.4h1V133.2h-1zM483,118.4h1V122.7h-1zM484,120.3h1V137.0h-1zM484,127.5h1V137.0h-1zM485,127.5h1V133.0h-1zM485,128.9h1V133.0h-1zM486,118.8h1V131.3h-1zM486,118.8h1V130.5h-1zM487,128.1h1V138.4h-1zM487,117.7h1V138.4h-1zM488,117.7h1V133.7h-1zM488,126.7h1V133.7h-1zM489,126.7h1V133.9h-1zM489,131.5h1V136.4h-1zM490,126.3h1V136.4h-1zM490,126.3h1V132.9h-1zM491,126.8h1V132.9h-1zM491,120.8h1V129.2h-1zM492,120.8h1V134.7h-1zM492,119.8h1V134.7h-1zM493,119.8h1V132.5h-1zM493,130.1h1V136.8h-1zM494,133.0h1V136.8h-1zM494,133.0h1V139.1h-1zM495,127.8h1V139.1h-1zM495,123.7h1V130.2h-1zM496,122.5h1V126.1h-1zM496,120.7h1V124.9h-1zM497,120.7h1V130.9h-1zM497,128.5h1V136.1h-1zM498,133.7h1V138.7h-1zM498,119.0h1V138.7h-1zM499,119.0h1V138.6h-1zM499,114.7h1V138.6h-1zM500,114.7h1V125.4h-1zM500,123.0h1V129.4h-1zM501,127.0h1V132.8h-1zM501,119.5h1V132.8h-1zM502,119.5h1V131.0h-1zM502,122.9h1V131.0h-1zM503,122.9h1V132.1h-1zM503,129.7h1V142.3h-1zM504,139.9h1V145.0h-1zM504,137.0h1V145.0h-1zM505,137.0h1V144.7h-1zM505,142.3h1V150.3h-1zM506,147.9h1V155.0h-1zM506,152.6h1V168.3h-1zM507,147.8h1V168.3h-1zM507,147.8h1V168.4h-1zM508,166.0h1V169.3h-1zM508,159.4h1V169.3h-1zM509,159.4h1V167.7h-1zM509,165.3h1V174.0h-1zM510,168.6h1V174.0h-1zM510,166.3h1V171.0h-1zM511,166.3h1V175.2h-1zM511,172.8h1V183.0h-1zM512,180.6h1V193.0h-1zM512,176.9h1V193.0h-1zM513,174.5h1V179.3h-1zM513,174.5h1V186.0h-1zM514,178.8h1V186.0h-1zM514,175.1h1V181.2h-1zM515,175.1h1V185.7h-1zM515,172.4h1V185.7h-1zM516,164.8h1V174.8h-1zM516,160.0h1V167.2h-1zM517,160.0h1V175.8h-1zM517,159.3h1V175.8h-1zM518,159.3h1V161.7h-1zM518,156.8h1V161.7h-1zM519,156.8h1V160.5h-1zM519,158.1h1V165.0h-1zM520,149.8h1V165.0h-1zM520,149.8h1V161.4h-1zM521,147.6h1V161.4h-1zM521,147.6h1V162.3h-1zM522,156.1h1V162.3h-1zM522,153.2h1V158.5h-1zM523,153.2h1V155.9h-1zM523,148.5h1V155.9h-1zM524,148.0h1V150.9h-1zM524,148.0h1V156.5h-1zM525,143.0h1V156.5h-1zM525,141.6h1V145.4h-1zM526,141.6h1V146.5h-1zM526,136.2h1V146.5h-1zM527,136.2h1V148.2h-1zM527,145.6h1V148.2h-1zM528,138.4h1V148.0h-1zM528,132.1h1V140.8h-1zM529,132.1h1V136.1h-1zM529,129.6h1V136.1h-1zM530,128.8h1V132.0h-1zM530,128.5h1V131.2h-1zM531,128.5h1V134.9h-1zM531,127.5h1V134.9h-1zM532,126.5h1V129.9h-1zM532,126.5h1V138.2h-1zM533,135.8h1V140.3h-1zM533,125.3h1V140.3h-1zM534,125.3h1V144.4h-1zM534,142.0h1V145.1h-1zM535,125.7h1V145.1h-1zM535,125.7h1V144.4h-1zM536,124.7h1V144.4h-1zM536,124.7h1V141.5h-1zM537,135.6h1V141.5h-1zM537,130.6h1V138.0h-1zM538,130.6h1V135.9h-1zM538,133.5h1V141.5h-1zM539,125.0h1V141.5h-1zM539,125.0h1V130.6h-1zM540,120.7h1V130.6h-1zM540,120.7h1V143.9h-1zM541,124.9h1V143.9h-1zM541,118.5h1V127.3h-1zM542,118.5h1V125.0h-1zM542,122.6h1V132.8h-1zM543,130.4h1V135.5h-1zM543,121.9h1V135.5h-1zM544,121.9h1V126.3h-1zM544,123.9h1V129.7h-1zM545,127.3h1V139.9h-1zM545,132.5h1V139.9h-1zM546,123.9h1V134.9h-1zM546,121.9h1V126.3h-1zM547,121.9h1V134.2h-1zM547,120.3h1V134.2h-1zM548,120.3h1V135.4h-1zM548,133.0h1V141.7h-1zM549,139.2h1V141.7h-1zM549,134.3h1V141.6h-1z" fill="#0000ff"/>
<path d="M87,104.8h1V112.0h-1zM88,104.9h1V114.1h-1zM89,104.6h1V111.2h-1zM90,104.7h1V113.8h-1zM91,105.0h1V111.6h-1zM92,104.8h1V111.6h-1zM93,103.2h1V115.2h-1zM94,104.6h1V113.9h-1zM95,104.8h1V114.8h-1zM96,104.9h1V111.5h-1zM97,104.9h1V114.7h-1zM98,104.9h1V114.4h-1zM99,104.9h1V115.4h-1zM100,104.8h1V115.7h-1zM101,104.9h1V113.6h-1zM102,104.9h1V111.5h-1zM103,103.4h1V109.1h-1zM104,104.9h1V115.6h-1zM105,102.3h1V115.0h-1zM106,102.6h1V113.9h-1zM107,104.6h1V113.4h-1zM108,104.8h1V111.4h-1zM109,104.8h1V109.1h-1zM110,102.3h1V111.2h-1zM111,105.0h1V115.7h-1zM112,104.7h1V112.0h-1zM113,104.5h1V111.8h-1zM114,104.6h1V109.1h-1zM115,104.7h1V111.3h-1zM116,104.6h1V111.9h-1zM117,105.0h1V111.2h-1zM118,104.7h1V113.4h-1zM119,104.7h1V111.4h-1zM120,103.0h1V111.8h-1zM121,104.6h1V114.5h-1zM122,104.6h1V114.4h-1zM123,104.9h1V115.3h-1zM124,104.8h1V115.0h-1zM125,103.0h1V115.3h-1zM126,104.9h1V111.7h-1zM127,104.6h1V114.5h-1zM128,103.2h1V115.0h-1zM129,104.6h1V111.5h-1zM130,104.5h1V111.2h-1zM131,104.7h1V111.9h-1zM132,104.6h1V111.7h-1zM133,104.8h1V109.0h-1zM134,104.5h1V113.4h-1zM135,102.3h1V115.1h-1zM136,102.7h1V111.2h-1zM137,104.5h1V108.9h-1zM138,104.7h1V111.3h-1zM139,104.4h1V111.3h-1zM140,104.7h1V108.9h-1zM141,104.7h1V115.4h-1zM142,104.5h1V111.4h-1zM143,104.5h1V114.2h-1zM144,104.5h1V113.5h-1zM145,103.0h1V114.7h-1zM146,104.5h1V114.3h-1zM147,104.6h1V111.3h-1zM148,104.6h1V111.4h-1zM149,102.2h1V108.7h-1zM150,101.8h1V111.6h-1zM151,102.0h1V111.0h-1zM152,102.9h1V111.4h-1zM153,104.1h1V111.2h-1zM154,102.4h1V110.9h-1zM155,104.5h1V110.9h-1zM156,104.5h1V111.6h-1zM157,104.3h1V114.5h-1zM158,104.4h1V113.3h-1zM159,104.5h1V108.6h-1zM160,104.2h1V111.2h-1zM161,104.3h1V108.6h-1zM162,104.2h1V108.5h-1zM163,102.5h1V116.3h-1zM164,104.1h1V110.8h-1zM165,104.1h1V111.1h-1zM166,102.1h1V111.5h-1zM167,104.2h1V113.4h-1zM168,104.1h1V111.5h-1zM169,104.0h1V114.9h-1zM170,104.2h1V115.0h-1zM171,104.1h1V110.9h-1zM172,102.7h1V113.2h-1zM173,104.2h1V115.1h-1zM174,104.4h1V108.5h-1zM175,104.3h1V111.4h-1zM176,104.0h1V110.7h-1zM177,104.4h1V110.7h-1zM178,104.3h1V111.0h-1zM179,101.8h1V110.8h-1zM180,104.2h1V111.2h-1zM181,104.0h1V110.8h-1zM182,104.4h1V110.8h-1zM183,104.1h1V110.7h-1zM184,104.2h1V110.8h-1zM185,104.4h1V111.3h-1zM186,104.2h1V111.3h-1zM187,104.2h1V111.3h-1zM188,102.9h1V108.5h-1zM189,102.7h1V111.3h-1zM190,104.2h1V113.6h-1zM191,104.2h1V111.2h-1zM192,103.9h1V113.7h-1zM193,104.0h1V110.9h-1zM194,104.2h1V111.1h-1zM195,104.1h1V112.9h-1zM196,104.1h1V111.5h-1zM197,102.0h1V110.7h-1zM198,104.1h1V113.3h-1zM199,104.1h1V111.0h-1zM200,104.2h1V111.2h-1zM201,104.0h1V111.4h-1zM202,103.9h1V111.1h-1zM203,104.2h1V111.3h-1zM204,104.3h1V113.5h-1zM205,102.4h1V110.8h-1zM206,102.7h1V110.8h-1zM207,101.9h1V114.1h-1zM208,104.2h1V114.1h-1zM209,104.2h1V110.6h-1zM210,104.1h1V110.8h-1zM211,104.4h1V110.9h-1zM212,101.8h1V110.9h-1zM213,101.9h1V114.7h-1zM214,104.0h1V113.9h-1zM215,103.9h1V111.4h-1zM216,102.2h1V111.3h-1zM217,102.6h1V110.9h-1zM218,104.2h1V110.7h-1zM219,104.0h1V110.6h-1zM220,104.1h1V110.6h-1zM221,104.1h1V113.6h-1zM222,104.1h1V115.0h-1zM223,102.8h1V114.4h-1zM224,104.3h1V113.3h-1zM225,104.3h1V110.7h-1zM226,104.1h1V116.4h-1zM227,104.1h1V108.5h-1zM228,104.4h1V113.7h-1zM229,101.9h1V111.2h-1zM230,104.2h1V110.7h-1zM231,104.0h1V110.8h-1zM232,104.4h1V114.9h-1zM233,101.7h1V111.5h-1zM234,104.1h1V111.4h-1zM235,104.3h1V114.1h-1zM236,102.7h1V110.7h-1zM237,104.1h1V111.2h-1zM238,104.0h1V113.7h-1zM239,104.3h1V114.3h-1zM240,104.1h1V111.5h-1zM241,104.1h1V111.3h-1zM242,104.0h1V108.5h-1zM243,103.9h1V111.1h-1zM244,104.4h1V111.4h-1zM245,102.4h1V110.7h-1zM246,102.6h1V111.1h-1zM247,104.4h1V108.5h-1zM248,104.2h1V110.8h-1zM249,104.4h1V116.1h-1zM250,104.3h1V110.7h-1zM251,101.7h1V113.9h-1zM252,103.9h1V110.8h-1zM253,104.3h1V114.8h-1zM254,104.3h1V113.0h-1zM255,104.2h1V108.5h-1zM256,104.1h1V113.3h-1zM257,102.1h1V110.8h-1zM258,104.1h1V113.5h-1zM259,101.6h1V111.2h-1zM260,104.1h1V114.6h-1zM261,104.3h1V110.8h-1zM262,102.4h1V108.5h-1zM263,103.9h1V110.8h-1zM264,104.1h1V111.1h-1zM265,101.9h1V114.2h-1zM266,104.2h1V113.9h-1zM267,104.1h1V110.6h-1zM268,102.3h1V110.7h-1zM269,104.3h1V110.7h-1zM270,104.0h1V113.5h-1zM271,101.9h1V113.4h-1zM272,102.4h1V111.3h-1zM273,103.9h1V111.0h-1zM274,101.8h1V113.7h-1zM275,104.2h1V110.6h-1zM276,102.4h1V111.1h-1zM277,104.2h1V113.7h-1zM278,104.4h1V111.2h-1zM279,104.2h1V111.4h-1zM280,102.7h1V113.9h-1zM281,104.2h1V108.5h-1zM282,104.2h1V112.8h-1zM283,104.3h1V113.6h-1zM284,103.9h1V111.3h-1zM285,104.2h1V114.6h-1zM286,102.8h1V110.8h-1zM287,102.0h1V114.5h-1zM288,104.3h1V110.9h-1zM289,104.0h1V112.9h-1zM290,104.1h1V114.3h-1zM291,104.3h1V111.2h-1zM292,104.1h1V113.7h-1zM293,104.2h1V110.7h-1zM294,104.1h1V110.7h-1zM295,104.1h1V113.7h-1zM296,104.4h1V110.6h-1zM297,104.2h1V110.6h-1zM298,104.3h1V110.8h-1zM299,104.2h1V111.4h-1zM300,104.2h1V110.8h-1zM301,103.9h1V113.6h-1zM302,104.3h1V112.8h-1zM303,104.2h1V111.0h-1zM304,104.1h1V114.8h-1zM305,104.0h1V111.2h-1zM306,104.1h1V114.5h-1zM307,102.3h1V112.9h-1zM308,104.3h1V110.7h-1zM309,104.3h1V113.4h-1zM310,102.0h1V113.6h-1zM311,104.0h1V111.1h-1zM312,104.0h1V110.7h-1zM313,104.3h1V111.1h-1zM314,104.1h1V111.2h-1zM315,102.6h1V110.7h-1zM316,104.3h1V110.6h-1zM317,104.2h1V111.4h-1zM318,104.0h1V108.5h-1zM319,101.7h1V113.9h-1zM320,102.1h1V113.3h-1zM321,101.8h1V113.0h-1zM322,101.8h1V108.5h-1zM323,104.0h1V110.7h-1zM324,104.3h1V108.5h-1zM325,102.8h1V113.0h-1zM326,102.7h1V116.7h-1zM327,104.0h1V111.3h-1zM328,101.7h1V108.5h-1zM329,102.2h1V113.7h-1zM330,104.1h1V113.4h-1zM331,104.2h1V114.5h-1zM332,102.5h1V116.6h-1zM333,104.2h1V114.8h-1zM334,104.0h1V111.5h-1zM335,104.2h1V110.8h-1zM336,104.2h1V114.3h-1zM337,104.1h1V111.2h-1zM338,104.1h1V110.7h-1zM339,102.2h1V110.9h-1zM340,104.4h1V111.0h-1zM341,104.3h1V114.5h-1zM342,101.6h1V108.5h-1zM343,104.0h1V111.4h-1zM344,103.9h1V114.7h-1zM345,102.6h1V108.5h-1zM346,101.9h1V111.0h-1zM347,104.1h1V113.6h-1zM348,104.4h1V113.2h-1zM349,101.6h1V114.2h-1zM350,104.0h1V113.6h-1zM351,104.1h1V113.1h-1zM352,104.2h1V110.7h-1zM353,104.3h1V108.5h-1zM354,104.2h1V110.7h-1zM355,104.2h1V114.4h-1zM356,104.1h1V111.4h-1zM357,104.2h1V108.5h-1zM358,104.2h1V111.0h-1zM359,102.4h1V114.9h-1zM360,104.2h1V111.3h-1zM361,102.5h1V108.5h-1zM362,104.1h1V114.3h-1zM363,104.2h1V110.9h-1zM364,103.9h1V108.5h-1zM365,102.4h1V108.5h-1zM366,102.5h1V113.7h-1zM367,104.4h1V111.2h-1zM368,102.3h1V114.8h-1zM369,104.0h1V110.9h-1zM370,102.2h1V113.0h-1zM371,104.3h1V113.3h-1zM372,101.8h1V115.0h-1zM373,104.2h1V115.9h-1zM374,102.3h1V113.1h-1zM375,102.4h1V113.4h-1zM376,103.9h1V111.0h-1zM377,104.1h1V114.5h-1zM378,104.2h1V111.0h-1zM379,104.4h1V110.7h-1zM380,104.3h1V110.9h-1zM381,104.0h1V116.8h-1zM382,103.9h1V114.2h-1zM383,104.2h1V113.0h-1zM384,104.3h1V111.0h-1zM385,104.1h1V113.5h-1zM386,104.0h1V114.2h-1zM387,103.9h1V110.6h-1zM388,104.4h1V111.0h-1zM389,104.4h1V111.0h-1zM390,104.2h1V113.1h-1zM391,102.6h1V110.7h-1zM392,103.9h1V111.0h-1zM393,104.0h1V110.6h-1zM394,103.9h1V111.2h-1zM395,102.5h1V113.6h-1zM396,104.1h1V114.1h-1zM397,102.6h1V111.2h-1zM398,104.3h1V111.3h-1zM399,104.1h1V111.5h-1zM400,104.3h1V110.7h-1zM401,104.1h1V115.0h-1zM402,102.7h1V111.3h-1zM403,104.3h1V111.1h-1zM404,104.2h1V114.8h-1zM405,104.3h1V113.5h-1zM406,104.3h1V114.0h-1zM407,104.3h1V108.5h-1zM408,104.0h1V111.2h-1zM409,104.4h1V108.5h-1zM410,104.2h1V111.3h-1zM411,101.7h1V111.5h-1zM412,101.6h1V114.8h-1zM413,104.1h1V110.6h-1zM414,102.3h1V114.0h-1zM415,104.2h1V111.2h-1zM416,104.2h1V113.5h-1zM417,104.0h1V108.5h-1zM418,102.3h1V108.5h-1zM419,102.3h1V111.4h-1zM420,104.3h1V112.9h-1zM421,104.1h1V115.7h-1zM422,104.0h1V108.5h-1zM423,104.2h1V111.3h-1zM424,101.8h1V113.1h-1zM425,102.1h1V114.0h-1zM426,104.0h1V114.5h-1zM427,104.0h1V113.3h-1zM428,103.9h1V110.9h-1zM429,104.3h1V111.3h-1zM430,104.3h1V116.6h-1zM431,102.7h1V111.4h-1zM432,102.0h1V111.4h-1zM433,104.3h1V111.4h-1zM434,104.2h1V113.2h-1zM435,102.3h1V110.8h-1zM436,102.7h1V113.5h-1zM437,103.9h1V110.7h-1zM438,104.0h1V108.5h-1zM439,104.2h1V114.6h-1zM440,104.4h1V112.8h-1zM441,104.0h1V112.8h-1zM442,104.4h1V111.2h-1zM443,104.2h1V111.4h-1zM444,101.7h1V111.4h-1zM445,104.3h1V114.5h-1zM446,104.1h1V114.4h-1zM447,104.1h1V116.6h-1zM448,104.3h1V113.9h-1zM449,104.1h1V108.5h-1zM450,104.0h1V114.9h-1zM451,104.2h1V111.5h-1zM452,102.7h1V110.9h-1zM453,103.9h1V108.5h-1zM454,104.0h1V113.4h-1zM455,104.4h1V110.9h-1zM456,103.9h1V115.1h-1zM457,104.2h1V111.2h-1zM458,104.3h1V110.7h-1zM459,104.0h1V111.4h-1zM460,104.2h1V114.3h-1zM461,104.1h1V114.3h-1zM462,103.9h1V115.0h-1zM463,103.9h1V110.9h-1zM464,104.4h1V108.5h-1zM465,102.5h1V112.9h-1zM466,104.1h1V108.5h-1zM467,102.4h1V111.5h-1zM468,104.1h1V114.0h-1zM469,102.8h1V111.3h-1zM470,104.0h1V110.9h-1zM471,104.2h1V110.7h-1zM472,104.4h1V110.8h-1zM473,104.2h1V111.3h-1zM474,102.9h1V115.7h-1zM475,104.2h1V110.7h-1zM476,102.6h1V114.8h-1zM477,101.9h1V111.4h-1zM478,104.2h1V111.0h-1zM479,104.2h1V111.0h-1zM480,104.2h1V108.5h-1zM481,104.1h1V110.9h-1zM482,101.9h1V111.2h-1zM483,104.2h1V110.6h-1zM484,104.1h1V114.9h-1zM485,104.1h1V111.4h-1zM486,102.0h1V111.1h-1zM487,103.9h1V111.3h-1zM488,104.3h1V114.2h-1zM489,104.1h1V114.2h-1zM490,104.1h1V108.5h-1zM491,104.0h1V110.9h-1zM492,104.2h1V113.7h-1zM493,104.3h1V113.2h-1zM494,104.4h1V111.3h-1zM495,102.0h1V111.4h-1zM496,104.0h1V111.0h-1zM497,102.7h1V111.5h-1zM498,103.9h1V111.0h-1zM499,104.1h1V114.8h-1zM500,104.3h1V114.4h-1zM501,102.9h1V115.1h-1zM502,102.0h1V113.4h-1zM503,104.1h1V111.0h-1zM504,104.2h1V113.5h-1zM505,104.3h1V111.4h-1zM506,104.0h1V111.2h-1zM507,104.2h1V111.1h-1zM508,103.0h1V112.9h-1zM509,104.1h1V110.8h-1zM510,104.1h1V111.0h-1zM511,103.9h1V113.4h-1zM512,104.1h1V110.9h-1zM513,102.8h1V108.5h-1zM514,104.3h1V111.4h-1zM515,104.1h1V111.0h-1zM516,104.2h1V116.0h-1zM517,104.1h1V115.0h-1zM518,104.3h1V110.8h-1zM519,102.7h1V113.2h-1zM520,103.9h1V114.3h-1zM521,103.9h1V111.1h-1zM522,104.0h1V113.4h-1zM523,102.6h1V110.8h-1zM524,103.9h1V111.2h-1zM525,104.4h1V112.9h-1zM526,104.2h1V110.7h-1zM527,104.1h1V113.2h-1zM528,102.7h1V108.5h-1zM529,104.1h1V114.7h-1zM530,104.3h1V110.6h-1zM531,104.4h1V113.1h-1zM532,104.3h1V113.2h-1zM533,104.2h1V111.1h-1zM534,104.4h1V114.8h-1zM535,102.5h1V111.4h-1zM536,102.6h1V114.5h-1zM537,102.4h1V108.5h-1zM538,104.3h1V108.5h-1zM539,104.1h1V108.5h-1zM540,103.9h1V113.7h-1zM541,104.3h1V113.5h-1zM542,104.3h1V113.6h-1zM543,104.3h1V115.6h-1zM544,104.2h1V114.4h-1zM545,104.2h1V111.4h-1zM546,104.2h1V111.3h-1zM547,102.1h1V112.9h-1zM548,104.3h1V111.1h-1zM549,104.4h1V111.0h-1z" fill="#e400e4"/>
<line x1="87" y1="141.5" x2="550" y2="141.5" stroke="#10a850" stroke-width="1"/>
<text x="534.6" y="102.8" textLength="14" lengthAdjust="spacingAndGlyphs" font-family="Liberation Mono" font-size="5.3" fill="#d0d0d0">73.68</text>
<text x="534.6" y="204.6" textLength="14" lengthAdjust="spacingAndGlyphs" font-family="Liberation Mono" font-size="5.3" fill="#d0d0d0">57.44</text>
<rect x="61" y="230.4" width="489" height="108.6" fill="#000"/>
<line x1="86.70" y1="230.4" x2="86.70" y2="339" stroke="#242424" stroke-width="1.2"/>
<line x1="122.97" y1="230.4" x2="122.97" y2="339" stroke="#242424" stroke-width="1.2"/>
<line x1="159.25" y1="230.4" x2="159.25" y2="339" stroke="#242424" stroke-width="1.2"/>
<line x1="195.52" y1="230.4" x2="195.52" y2="339" stroke="#242424" stroke-width="1.2"/>
<line x1="231.80" y1="230.4" x2="231.80" y2="339" stroke="#242424" stroke-width="1.2"/>
<line x1="268.07" y1="230.4" x2="268.07" y2="339" stroke="#242424" stroke-width="1.2"/>
<line x1="304.35" y1="230.4" x2="304.35" y2="339" stroke="#242424" stroke-width="1.2"/>
<line x1="340.62" y1="230.4" x2="340.62" y2="339" stroke="#242424" stroke-width="1.2"/>
<line x1="376.90" y1="230.4" x2="376.90" y2="339" stroke="#242424" stroke-width="1.2"/>
<line x1="413.17" y1="230.4" x2="413.17" y2="339" stroke="#242424" stroke-width="1.2"/>
<line x1="449.45" y1="230.4" x2="449.45" y2="339" stroke="#242424" stroke-width="1.2"/>
<line x1="485.72" y1="230.4" x2="485.72" y2="339" stroke="#242424" stroke-width="1.2"/>
<line x1="522.00" y1="230.4" x2="522.00" y2="339" stroke="#242424" stroke-width="1.2"/>
<line x1="61" y1="257.55" x2="550" y2="257.55" stroke="#242424" stroke-width="1.2"/>
<line x1="61" y1="284.70" x2="550" y2="284.70" stroke="#242424" stroke-width="1.2"/>
<line x1="61" y1="311.85" x2="550" y2="311.85" stroke="#242424" stroke-width="1.2"/>
<rect x="61.5" y="230.9" width="488" height="107.6" fill="none" stroke="#262626" stroke-width="0.8"/>
<path d="M87.00,231.0 200.00,231.3 232.00,232.0 260.00,234.0 290.00,236.2 350.00,239.6 440.00,244.0 480.00,245.3 550.00,245.7" fill="none" stroke="#7f2aa6" stroke-width="1.1"/>
<path d="M87.00,231.3 101.40,231.3 101.40,245.6 138.60,245.6 138.60,231.3 174.03,231.3 174.03,245.6 210.98,245.6 210.98,231.3 246.66,231.3 246.66,245.6 283.36,245.6 283.36,231.3 319.29,231.3 319.29,245.6 355.74,245.6 355.74,231.3 391.92,231.3 391.92,245.6 428.12,245.6 428.12,231.3 464.55,231.3 464.55,245.6 500.50,245.6 500.50,231.3 537.18,231.3 537.18,245.6 550.00,245.6" fill="none" stroke="#7f2aa6" stroke-width="1.1"/>
<path d="M87.00,333.0 H101.40 M101.40,338.5 H138.60 M138.60,333.0 H174.03 M174.03,338.5 H210.98 M210.98,333.0 H246.66 M246.66,338.5 H283.36 M283.36,333.0 H319.29 M319.29,338.5 H355.74 M355.74,333.0 H391.92 M391.92,338.5 H428.12 M428.12,333.0 H464.55 M464.55,338.5 H500.50 M500.50,333.0 H537.18 M537.18,338.5 H550.00" fill="none" stroke="#c00000" stroke-width="1.6"/>
<line x1="87" y1="336.9" x2="550" y2="336.9" stroke="#108a40" stroke-width="1.3"/>
<line x1="87" y1="334.4" x2="550" y2="334.4" stroke="#10a040" stroke-width="0.9"/>
<line x1="87" y1="335.5" x2="550" y2="335.5" stroke="#e8f8ee" stroke-width="1.2"/>
<text x="534.6" y="236.0" textLength="14" lengthAdjust="spacingAndGlyphs" font-family="Liberation Mono" font-size="5.3" fill="#d0d0d0">73.84</text>
<text x="534.6" y="338.4" textLength="14" lengthAdjust="spacingAndGlyphs" font-family="Liberation Mono" font-size="5.3" fill="#d0d0d0">52.12</text>
  <path d="M444.5,391.6 L444.5,398.4 L446.1,397.0 L447.5,399.0 L448.7,399.0 L447.4,396.5 L449.7,396.4 Z" fill="#fff" stroke="#000" stroke-width="0.7"/>
</svg>
</body></html>
